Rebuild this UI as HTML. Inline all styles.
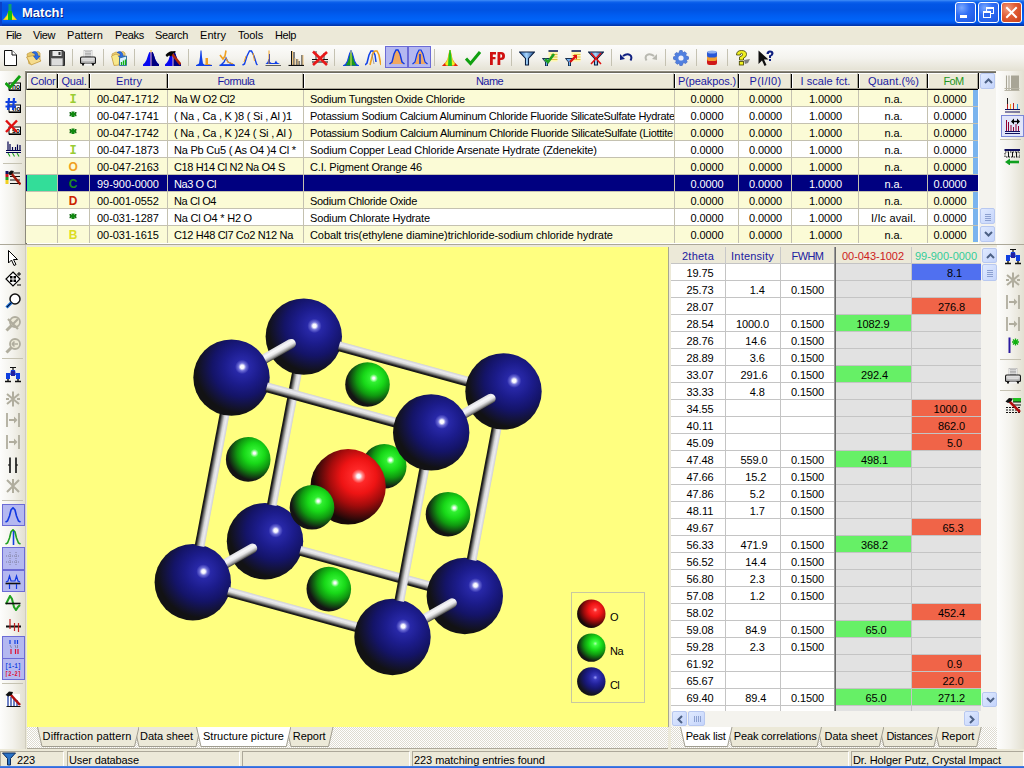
<!DOCTYPE html><html><head><meta charset="utf-8"><title>Match!</title><style>
*{margin:0;padding:0;box-sizing:border-box}
html,body{width:1024px;height:768px;overflow:hidden;background:#ece9d8;font-family:"Liberation Sans", sans-serif;font-size:11px;color:#000}
.a{position:absolute}
.t{position:absolute;white-space:nowrap;line-height:13px;letter-spacing:-0.15px}
</style></head><body>
<div class="a" style="left:0;top:0;width:1024px;height:26px;background:linear-gradient(to bottom,#3d8ef8 0px,#2a78f2 1px,#0d62ec 2px,#0256e6 4px,#0053e2 10px,#005cf0 15px,#0064f8 20px,#005af0 22px,#0049d2 24px,#0036ae 25px,#0036ae 26px)"></div>
<div class="a" style="left:0;top:2px;width:2px;height:24px;background:#0a40c8"></div>
<svg class="a" style="left:2px;top:3px" width="16" height="18" viewBox="0 0 16 18"><rect x="6.5" y="1" width="3" height="8" fill="#11a070"/><path d="M1 17 L5 12 L6 9 L10 9 L11 12 L15 17 Z" fill="#f0c020"/><path d="M3 16 L5.5 12.5 L6.5 9 L9.5 9 L10.5 12.5 L13 16 Z" fill="#e8f020"/><rect x="6" y="8" width="4" height="9" fill="#10c010"/></svg>
<div class="t" style="left:22px;top:5px;font-size:13px;line-height:16px;font-weight:bold;color:#fff;text-shadow:1px 1px 0 #0a1e80;letter-spacing:0">Match!</div>
<div class="a" style="left:955px;top:2px;width:21px;height:21px;border:1px solid #fff;border-radius:3px;background:radial-gradient(circle at 30% 25%,#7aa8ff 0%,#2f6ef5 40%,#1c56e0 100%)"><div class="a" style="left:4px;top:12px;width:7px;height:3px;background:#fff"></div></div>
<div class="a" style="left:978px;top:2px;width:21px;height:21px;border:1px solid #fff;border-radius:3px;background:radial-gradient(circle at 30% 25%,#7aa8ff 0%,#2f6ef5 40%,#1c56e0 100%)"><div class="a" style="left:7px;top:4px;width:8px;height:7px;border:1px solid #fff;border-top-width:2px"></div><div class="a" style="left:4px;top:8px;width:8px;height:7px;border:1px solid #fff;border-top-width:2px;background:#2a66ee"></div></div>
<div class="a" style="left:1001px;top:2px;width:21px;height:21px;border:1px solid #fff;border-radius:3px;background:radial-gradient(circle at 30% 30%,#f09c80 0%,#e05a32 45%,#c8401a 100%)"><svg class="a" style="left:3px;top:3px" width="13" height="13"><path d="M2 2 L11 11 M11 2 L2 11" stroke="#fff" stroke-width="2" stroke-linecap="square"/></svg></div>
<div class="a" style="left:0;top:26px;width:1024px;height:19px;background:#ece9d8;border-top:1px solid #f6f5ee"></div>
<div class="t" style="left:6px;top:29px;letter-spacing:-0.600px">File</div>
<div class="t" style="left:33px;top:29px;letter-spacing:-0.410px">View</div>
<div class="t" style="left:67px;top:29px;letter-spacing:0.071px">Pattern</div>
<div class="t" style="left:115px;top:29px;letter-spacing:-0.319px">Peaks</div>
<div class="t" style="left:155px;top:29px;letter-spacing:-0.312px">Search</div>
<div class="t" style="left:200px;top:29px;letter-spacing:0.062px">Entry</div>
<div class="t" style="left:238px;top:29px;letter-spacing:-0.138px">Tools</div>
<div class="t" style="left:275px;top:29px;letter-spacing:-0.406px">Help</div>
<div class="a" style="left:0;top:45px;width:1024px;height:26px;background:linear-gradient(to bottom,#fcfcfb 0%,#f4f3ee 50%,#e4e1d3 100%)"></div>
<div class="a" style="left:72px;top:49px;width:1px;height:17px;background:#c5c2b2"></div>
<div class="a" style="left:103px;top:49px;width:1px;height:17px;background:#c5c2b2"></div>
<div class="a" style="left:134px;top:49px;width:1px;height:17px;background:#c5c2b2"></div>
<div class="a" style="left:188px;top:49px;width:1px;height:17px;background:#c5c2b2"></div>
<div class="a" style="left:334px;top:49px;width:1px;height:17px;background:#c5c2b2"></div>
<div class="a" style="left:434px;top:49px;width:1px;height:17px;background:#c5c2b2"></div>
<div class="a" style="left:511px;top:49px;width:1px;height:17px;background:#c5c2b2"></div>
<div class="a" style="left:611px;top:49px;width:1px;height:17px;background:#c5c2b2"></div>
<div class="a" style="left:665px;top:49px;width:1px;height:17px;background:#c5c2b2"></div>
<div class="a" style="left:696px;top:49px;width:1px;height:17px;background:#c5c2b2"></div>
<div class="a" style="left:727px;top:49px;width:1px;height:17px;background:#c5c2b2"></div>
<div class="a" style="left:385px;top:46px;width:23px;height:22px;background:#b4b8f0;border:1px solid #6b6bd6"></div>
<div class="a" style="left:408px;top:46px;width:23px;height:22px;background:#b4b8f0;border:1px solid #6b6bd6"></div>
<div class="a" style="left:0;top:71px;width:25px;height:174px;background:linear-gradient(to right,#fdfdfc 0%,#f3f2ec 50%,#e3e0d2 100%)"></div>
<div class="a" style="left:3px;top:163px;width:19px;height:1px;background:#c5c2b2"></div>
<div class="a" style="left:25px;top:70px;width:971px;height:1px;background:#f4f3ee"></div>
<div class="a" style="left:25px;top:71px;width:971px;height:173px;background:#fff;border-top:1px solid #8c897c;border-left:1px solid #8c897c;"></div>
<div class="a" style="left:26px;top:72px;width:970px;height:1px;background:#6c6a60"></div>
<div class="a" style="left:26px;top:72px;width:1px;height:172px;background:#6c6a60"></div>
<div class="a" style="left:27px;top:73px;width:951px;height:16px;background:#ece9d8"></div>
<div class="a" style="left:27px;top:89px;width:951px;height:1px;background:#000"></div>
<div class="a" style="left:27px;top:73px;width:30px;height:16px;border-top:1px solid #fff;border-bottom:1px solid #aca899;border-right:1px solid #aca899;border-left:1px solid #fff;"></div>
<div class="t" style="left:28px;top:75px;width:30px;text-align:center;color:#1a1aa0;letter-spacing:-0.256px">Color</div>
<div class="a" style="left:57px;top:73px;width:1px;height:16px;background:#000"></div>
<div class="a" style="left:58px;top:73px;width:1px;height:16px;background:#fff"></div>
<div class="a" style="left:57px;top:73px;width:32px;height:16px;border-top:1px solid #fff;border-bottom:1px solid #aca899;border-right:1px solid #aca899;"></div>
<div class="t" style="left:58px;top:75px;width:32px;text-align:center;color:#1a1aa0;letter-spacing:-0.263px">Qual.</div>
<div class="a" style="left:89px;top:73px;width:1px;height:16px;background:#000"></div>
<div class="a" style="left:90px;top:73px;width:1px;height:16px;background:#fff"></div>
<div class="a" style="left:89px;top:73px;width:78px;height:16px;border-top:1px solid #fff;border-bottom:1px solid #aca899;border-right:1px solid #aca899;"></div>
<div class="t" style="left:90px;top:75px;width:78px;text-align:center;color:#1a1aa0;letter-spacing:0.062px">Entry</div>
<div class="a" style="left:167px;top:73px;width:1px;height:16px;background:#000"></div>
<div class="a" style="left:168px;top:73px;width:1px;height:16px;background:#fff"></div>
<div class="a" style="left:167px;top:73px;width:136px;height:16px;border-top:1px solid #fff;border-bottom:1px solid #aca899;border-right:1px solid #aca899;"></div>
<div class="t" style="left:168px;top:75px;width:136px;text-align:center;color:#1a1aa0;letter-spacing:-0.478px">Formula</div>
<div class="a" style="left:303px;top:73px;width:1px;height:16px;background:#000"></div>
<div class="a" style="left:304px;top:73px;width:1px;height:16px;background:#fff"></div>
<div class="a" style="left:303px;top:73px;width:371px;height:16px;border-top:1px solid #fff;border-bottom:1px solid #aca899;border-right:1px solid #aca899;"></div>
<div class="t" style="left:304px;top:75px;width:371px;text-align:center;color:#1a1aa0;letter-spacing:-0.586px">Name</div>
<div class="a" style="left:674px;top:73px;width:1px;height:16px;background:#000"></div>
<div class="a" style="left:675px;top:73px;width:1px;height:16px;background:#fff"></div>
<div class="a" style="left:674px;top:73px;width:64px;height:16px;border-top:1px solid #fff;border-bottom:1px solid #aca899;border-right:1px solid #aca899;"></div>
<div class="t" style="left:675px;top:75px;width:64px;text-align:center;color:#1a1aa0;letter-spacing:-0.122px">P(peakpos.)</div>
<div class="a" style="left:738px;top:73px;width:1px;height:16px;background:#000"></div>
<div class="a" style="left:739px;top:73px;width:1px;height:16px;background:#fff"></div>
<div class="a" style="left:738px;top:73px;width:53px;height:16px;border-top:1px solid #fff;border-bottom:1px solid #aca899;border-right:1px solid #aca899;"></div>
<div class="t" style="left:739px;top:75px;width:53px;text-align:center;color:#1a1aa0;letter-spacing:0.290px">P(I/I0)</div>
<div class="a" style="left:791px;top:73px;width:1px;height:16px;background:#000"></div>
<div class="a" style="left:792px;top:73px;width:1px;height:16px;background:#fff"></div>
<div class="a" style="left:791px;top:73px;width:67px;height:16px;border-top:1px solid #fff;border-bottom:1px solid #aca899;border-right:1px solid #aca899;"></div>
<div class="t" style="left:792px;top:75px;width:67px;text-align:center;color:#1a1aa0;letter-spacing:0.036px">I scale fct.</div>
<div class="a" style="left:858px;top:73px;width:1px;height:16px;background:#000"></div>
<div class="a" style="left:859px;top:73px;width:1px;height:16px;background:#fff"></div>
<div class="a" style="left:858px;top:73px;width:69px;height:16px;border-top:1px solid #fff;border-bottom:1px solid #aca899;border-right:1px solid #aca899;"></div>
<div class="t" style="left:859px;top:75px;width:69px;text-align:center;color:#1a1aa0;letter-spacing:0.094px">Quant.(%)</div>
<div class="a" style="left:927px;top:73px;width:1px;height:16px;background:#000"></div>
<div class="a" style="left:928px;top:73px;width:1px;height:16px;background:#fff"></div>
<div class="a" style="left:927px;top:73px;width:51px;height:16px;border-top:1px solid #fff;border-bottom:1px solid #aca899;border-right:1px solid #aca899;"></div>
<div class="t" style="left:928px;top:75px;width:51px;text-align:center;color:#1c961c;letter-spacing:-0.600px">FoM</div>
<div class="a" style="left:978px;top:73px;width:1px;height:16px;background:#000"></div>
<div class="a" style="left:979px;top:73px;width:1px;height:16px;background:#fff"></div>
<div class="a" style="left:26px;top:90px;width:952px;height:17px;background:#fbfbd6"></div>
<div class="a" style="left:26px;top:106px;width:952px;height:1px;background:#c4c1b0"></div>
<div class="a" style="left:57px;top:90px;width:1px;height:17px;background:#c4c1b0"></div>
<div class="a" style="left:89px;top:90px;width:1px;height:17px;background:#c4c1b0"></div>
<div class="a" style="left:167px;top:90px;width:1px;height:17px;background:#c4c1b0"></div>
<div class="a" style="left:303px;top:90px;width:1px;height:17px;background:#c4c1b0"></div>
<div class="a" style="left:674px;top:90px;width:1px;height:17px;background:#c4c1b0"></div>
<div class="a" style="left:738px;top:90px;width:1px;height:17px;background:#c4c1b0"></div>
<div class="a" style="left:791px;top:90px;width:1px;height:17px;background:#c4c1b0"></div>
<div class="a" style="left:858px;top:90px;width:1px;height:17px;background:#c4c1b0"></div>
<div class="a" style="left:927px;top:90px;width:1px;height:17px;background:#c4c1b0"></div>
<div class="t" style="left:57px;top:94px;width:32px;text-align:center;color:#99cc33;font-weight:bold;font-family:'Liberation Mono',monospace;font-size:12px">I</div>
<div class="t" style="left:97px;top:93px;color:#000;letter-spacing:-0.040px">00-047-1712</div>
<div class="t" style="left:174px;top:93px;color:#000;letter-spacing:-0.347px">Na W O2 Cl2</div>
<div class="a" style="left:304px;top:90px;width:370px;height:16px;overflow:hidden"><div class="t" style="left:6px;top:3px;color:#000;letter-spacing:-0.217px">Sodium Tungsten Oxide Chloride</div></div>
<div class="t" style="left:675px;top:93px;width:64px;text-align:center;color:#000;letter-spacing:-0.115px">0.0000</div>
<div class="t" style="left:739px;top:93px;width:53px;text-align:center;color:#000;letter-spacing:-0.115px">0.0000</div>
<div class="t" style="left:792px;top:93px;width:67px;text-align:center;color:#000;letter-spacing:-0.115px">1.0000</div>
<div class="t" style="left:859px;top:93px;width:69px;text-align:center;color:#000;letter-spacing:-0.094px">n.a.</div>
<div class="t" style="left:927px;top:93px;width:46px;text-align:center;color:#000;letter-spacing:-0.115px">0.0000</div>
<div class="a" style="left:973px;top:90px;width:5px;height:16px;background:#7ab4ee"></div>
<div class="a" style="left:26px;top:107px;width:952px;height:17px;background:#ffffff"></div>
<div class="a" style="left:26px;top:123px;width:952px;height:1px;background:#c4c1b0"></div>
<div class="a" style="left:57px;top:107px;width:1px;height:17px;background:#c4c1b0"></div>
<div class="a" style="left:89px;top:107px;width:1px;height:17px;background:#c4c1b0"></div>
<div class="a" style="left:167px;top:107px;width:1px;height:17px;background:#c4c1b0"></div>
<div class="a" style="left:303px;top:107px;width:1px;height:17px;background:#c4c1b0"></div>
<div class="a" style="left:674px;top:107px;width:1px;height:17px;background:#c4c1b0"></div>
<div class="a" style="left:738px;top:107px;width:1px;height:17px;background:#c4c1b0"></div>
<div class="a" style="left:791px;top:107px;width:1px;height:17px;background:#c4c1b0"></div>
<div class="a" style="left:858px;top:107px;width:1px;height:17px;background:#c4c1b0"></div>
<div class="a" style="left:927px;top:107px;width:1px;height:17px;background:#c4c1b0"></div>
<svg class="a" style="left:69px;top:111px" width="8" height="7"><rect x="2.5" y="0.5" width="3" height="5.5" fill="#108a10"/><rect x="1" y="2" width="6" height="2.5" fill="#108a10"/><rect x="0.5" y="1" width="1.6" height="1.6" fill="#1e6a1e"/><rect x="5.9" y="1" width="1.6" height="1.6" fill="#1e6a1e"/><rect x="0.5" y="3.6" width="1.6" height="1.6" fill="#1e6a1e"/><rect x="5.9" y="3.6" width="1.6" height="1.6" fill="#1e6a1e"/></svg>
<div class="t" style="left:97px;top:110px;color:#000;letter-spacing:-0.040px">00-047-1741</div>
<div class="t" style="left:174px;top:110px;color:#000;letter-spacing:-0.213px">( Na , Ca , K )8 ( Si , Al )1</div>
<div class="a" style="left:304px;top:107px;width:370px;height:16px;overflow:hidden"><div class="t" style="left:6px;top:3px;color:#000;letter-spacing:-0.295px">Potassium Sodium Calcium Aluminum Chloride Fluoride SilicateSulfate Hydrate</div></div>
<div class="t" style="left:675px;top:110px;width:64px;text-align:center;color:#000;letter-spacing:-0.115px">0.0000</div>
<div class="t" style="left:739px;top:110px;width:53px;text-align:center;color:#000;letter-spacing:-0.115px">0.0000</div>
<div class="t" style="left:792px;top:110px;width:67px;text-align:center;color:#000;letter-spacing:-0.115px">1.0000</div>
<div class="t" style="left:859px;top:110px;width:69px;text-align:center;color:#000;letter-spacing:-0.094px">n.a.</div>
<div class="t" style="left:927px;top:110px;width:46px;text-align:center;color:#000;letter-spacing:-0.115px">0.0000</div>
<div class="a" style="left:973px;top:107px;width:5px;height:16px;background:#7ab4ee"></div>
<div class="a" style="left:26px;top:124px;width:952px;height:17px;background:#fbfbd6"></div>
<div class="a" style="left:26px;top:140px;width:952px;height:1px;background:#c4c1b0"></div>
<div class="a" style="left:57px;top:124px;width:1px;height:17px;background:#c4c1b0"></div>
<div class="a" style="left:89px;top:124px;width:1px;height:17px;background:#c4c1b0"></div>
<div class="a" style="left:167px;top:124px;width:1px;height:17px;background:#c4c1b0"></div>
<div class="a" style="left:303px;top:124px;width:1px;height:17px;background:#c4c1b0"></div>
<div class="a" style="left:674px;top:124px;width:1px;height:17px;background:#c4c1b0"></div>
<div class="a" style="left:738px;top:124px;width:1px;height:17px;background:#c4c1b0"></div>
<div class="a" style="left:791px;top:124px;width:1px;height:17px;background:#c4c1b0"></div>
<div class="a" style="left:858px;top:124px;width:1px;height:17px;background:#c4c1b0"></div>
<div class="a" style="left:927px;top:124px;width:1px;height:17px;background:#c4c1b0"></div>
<svg class="a" style="left:69px;top:128px" width="8" height="7"><rect x="2.5" y="0.5" width="3" height="5.5" fill="#108a10"/><rect x="1" y="2" width="6" height="2.5" fill="#108a10"/><rect x="0.5" y="1" width="1.6" height="1.6" fill="#1e6a1e"/><rect x="5.9" y="1" width="1.6" height="1.6" fill="#1e6a1e"/><rect x="0.5" y="3.6" width="1.6" height="1.6" fill="#1e6a1e"/><rect x="5.9" y="3.6" width="1.6" height="1.6" fill="#1e6a1e"/></svg>
<div class="t" style="left:97px;top:127px;color:#000;letter-spacing:-0.040px">00-047-1742</div>
<div class="t" style="left:174px;top:127px;color:#000;letter-spacing:-0.213px">( Na , Ca , K )24 ( Si , Al )</div>
<div class="a" style="left:304px;top:124px;width:370px;height:16px;overflow:hidden"><div class="t" style="left:6px;top:3px;color:#000;letter-spacing:-0.282px">Potassium Sodium Calcium Aluminum Chloride Fluoride SilicateSulfate (Liottite</div></div>
<div class="t" style="left:675px;top:127px;width:64px;text-align:center;color:#000;letter-spacing:-0.115px">0.0000</div>
<div class="t" style="left:739px;top:127px;width:53px;text-align:center;color:#000;letter-spacing:-0.115px">0.0000</div>
<div class="t" style="left:792px;top:127px;width:67px;text-align:center;color:#000;letter-spacing:-0.115px">1.0000</div>
<div class="t" style="left:859px;top:127px;width:69px;text-align:center;color:#000;letter-spacing:-0.094px">n.a.</div>
<div class="t" style="left:927px;top:127px;width:46px;text-align:center;color:#000;letter-spacing:-0.115px">0.0000</div>
<div class="a" style="left:973px;top:124px;width:5px;height:16px;background:#7ab4ee"></div>
<div class="a" style="left:26px;top:141px;width:952px;height:17px;background:#ffffff"></div>
<div class="a" style="left:26px;top:157px;width:952px;height:1px;background:#c4c1b0"></div>
<div class="a" style="left:57px;top:141px;width:1px;height:17px;background:#c4c1b0"></div>
<div class="a" style="left:89px;top:141px;width:1px;height:17px;background:#c4c1b0"></div>
<div class="a" style="left:167px;top:141px;width:1px;height:17px;background:#c4c1b0"></div>
<div class="a" style="left:303px;top:141px;width:1px;height:17px;background:#c4c1b0"></div>
<div class="a" style="left:674px;top:141px;width:1px;height:17px;background:#c4c1b0"></div>
<div class="a" style="left:738px;top:141px;width:1px;height:17px;background:#c4c1b0"></div>
<div class="a" style="left:791px;top:141px;width:1px;height:17px;background:#c4c1b0"></div>
<div class="a" style="left:858px;top:141px;width:1px;height:17px;background:#c4c1b0"></div>
<div class="a" style="left:927px;top:141px;width:1px;height:17px;background:#c4c1b0"></div>
<div class="t" style="left:57px;top:145px;width:32px;text-align:center;color:#99cc33;font-weight:bold;font-family:'Liberation Mono',monospace;font-size:12px">I</div>
<div class="t" style="left:97px;top:144px;color:#000;letter-spacing:-0.040px">00-047-1873</div>
<div class="t" style="left:174px;top:144px;color:#000;letter-spacing:-0.209px">Na Pb Cu5 ( As O4 )4 Cl *</div>
<div class="a" style="left:304px;top:141px;width:370px;height:16px;overflow:hidden"><div class="t" style="left:6px;top:3px;color:#000;letter-spacing:-0.141px">Sodium Copper Lead Chloride Arsenate Hydrate (Zdenekite)</div></div>
<div class="t" style="left:675px;top:144px;width:64px;text-align:center;color:#000;letter-spacing:-0.115px">0.0000</div>
<div class="t" style="left:739px;top:144px;width:53px;text-align:center;color:#000;letter-spacing:-0.115px">0.0000</div>
<div class="t" style="left:792px;top:144px;width:67px;text-align:center;color:#000;letter-spacing:-0.115px">1.0000</div>
<div class="t" style="left:859px;top:144px;width:69px;text-align:center;color:#000;letter-spacing:-0.094px">n.a.</div>
<div class="t" style="left:927px;top:144px;width:46px;text-align:center;color:#000;letter-spacing:-0.115px">0.0000</div>
<div class="a" style="left:973px;top:141px;width:5px;height:16px;background:#7ab4ee"></div>
<div class="a" style="left:26px;top:158px;width:952px;height:17px;background:#fbfbd6"></div>
<div class="a" style="left:26px;top:174px;width:952px;height:1px;background:#c4c1b0"></div>
<div class="a" style="left:57px;top:158px;width:1px;height:17px;background:#c4c1b0"></div>
<div class="a" style="left:89px;top:158px;width:1px;height:17px;background:#c4c1b0"></div>
<div class="a" style="left:167px;top:158px;width:1px;height:17px;background:#c4c1b0"></div>
<div class="a" style="left:303px;top:158px;width:1px;height:17px;background:#c4c1b0"></div>
<div class="a" style="left:674px;top:158px;width:1px;height:17px;background:#c4c1b0"></div>
<div class="a" style="left:738px;top:158px;width:1px;height:17px;background:#c4c1b0"></div>
<div class="a" style="left:791px;top:158px;width:1px;height:17px;background:#c4c1b0"></div>
<div class="a" style="left:858px;top:158px;width:1px;height:17px;background:#c4c1b0"></div>
<div class="a" style="left:927px;top:158px;width:1px;height:17px;background:#c4c1b0"></div>
<div class="t" style="left:57px;top:160px;width:32px;text-align:center;color:#f0a020;font-weight:bold;font-size:12px;line-height:15px">O</div>
<div class="t" style="left:97px;top:161px;color:#000;letter-spacing:-0.040px">00-047-2163</div>
<div class="t" style="left:174px;top:161px;color:#000;letter-spacing:-0.394px">C18 H14 Cl N2 Na O4 S</div>
<div class="a" style="left:304px;top:158px;width:370px;height:16px;overflow:hidden"><div class="t" style="left:6px;top:3px;color:#000;letter-spacing:-0.166px">C.I. Pigment Orange 46</div></div>
<div class="t" style="left:675px;top:161px;width:64px;text-align:center;color:#000;letter-spacing:-0.115px">0.0000</div>
<div class="t" style="left:739px;top:161px;width:53px;text-align:center;color:#000;letter-spacing:-0.115px">0.0000</div>
<div class="t" style="left:792px;top:161px;width:67px;text-align:center;color:#000;letter-spacing:-0.115px">1.0000</div>
<div class="t" style="left:859px;top:161px;width:69px;text-align:center;color:#000;letter-spacing:-0.094px">n.a.</div>
<div class="t" style="left:927px;top:161px;width:46px;text-align:center;color:#000;letter-spacing:-0.115px">0.0000</div>
<div class="a" style="left:973px;top:158px;width:5px;height:16px;background:#7ab4ee"></div>
<div class="a" style="left:26px;top:175px;width:952px;height:17px;background:#000080"></div>
<div class="a" style="left:27px;top:175px;width:30px;height:16px;background:#33dd99"></div>
<div class="a" style="left:26px;top:191px;width:952px;height:1px;background:#c4c1b0"></div>
<div class="a" style="left:57px;top:175px;width:1px;height:17px;background:#c4c1b0"></div>
<div class="a" style="left:89px;top:175px;width:1px;height:17px;background:#c4c1b0"></div>
<div class="a" style="left:167px;top:175px;width:1px;height:17px;background:#c4c1b0"></div>
<div class="a" style="left:303px;top:175px;width:1px;height:17px;background:#c4c1b0"></div>
<div class="a" style="left:674px;top:175px;width:1px;height:17px;background:#c4c1b0"></div>
<div class="a" style="left:738px;top:175px;width:1px;height:17px;background:#c4c1b0"></div>
<div class="a" style="left:791px;top:175px;width:1px;height:17px;background:#c4c1b0"></div>
<div class="a" style="left:858px;top:175px;width:1px;height:17px;background:#c4c1b0"></div>
<div class="a" style="left:927px;top:175px;width:1px;height:17px;background:#c4c1b0"></div>
<div class="t" style="left:57px;top:177px;width:32px;text-align:center;color:#1e8a1e;font-weight:bold;font-size:12px;line-height:15px">C</div>
<div class="t" style="left:97px;top:178px;color:#fff;letter-spacing:-0.040px">99-900-0000</div>
<div class="t" style="left:174px;top:178px;color:#fff;letter-spacing:-0.406px">Na3 O Cl</div>
<div class="a" style="left:304px;top:175px;width:370px;height:16px;overflow:hidden"><div class="t" style="left:6px;top:3px;color:#fff"></div></div>
<div class="t" style="left:675px;top:178px;width:64px;text-align:center;color:#fff;letter-spacing:-0.115px">0.0000</div>
<div class="t" style="left:739px;top:178px;width:53px;text-align:center;color:#fff;letter-spacing:-0.115px">0.0000</div>
<div class="t" style="left:792px;top:178px;width:67px;text-align:center;color:#fff;letter-spacing:-0.115px">1.0000</div>
<div class="t" style="left:859px;top:178px;width:69px;text-align:center;color:#fff;letter-spacing:-0.094px">n.a.</div>
<div class="t" style="left:927px;top:178px;width:46px;text-align:center;color:#fff;letter-spacing:-0.115px">0.0000</div>
<div class="a" style="left:973px;top:175px;width:5px;height:16px;background:#000080"></div>
<div class="a" style="left:26px;top:192px;width:952px;height:17px;background:#fbfbd6"></div>
<div class="a" style="left:26px;top:208px;width:952px;height:1px;background:#c4c1b0"></div>
<div class="a" style="left:57px;top:192px;width:1px;height:17px;background:#c4c1b0"></div>
<div class="a" style="left:89px;top:192px;width:1px;height:17px;background:#c4c1b0"></div>
<div class="a" style="left:167px;top:192px;width:1px;height:17px;background:#c4c1b0"></div>
<div class="a" style="left:303px;top:192px;width:1px;height:17px;background:#c4c1b0"></div>
<div class="a" style="left:674px;top:192px;width:1px;height:17px;background:#c4c1b0"></div>
<div class="a" style="left:738px;top:192px;width:1px;height:17px;background:#c4c1b0"></div>
<div class="a" style="left:791px;top:192px;width:1px;height:17px;background:#c4c1b0"></div>
<div class="a" style="left:858px;top:192px;width:1px;height:17px;background:#c4c1b0"></div>
<div class="a" style="left:927px;top:192px;width:1px;height:17px;background:#c4c1b0"></div>
<div class="t" style="left:57px;top:194px;width:32px;text-align:center;color:#cc2200;font-weight:bold;font-size:12px;line-height:15px">D</div>
<div class="t" style="left:97px;top:195px;color:#000;letter-spacing:-0.040px">00-001-0552</div>
<div class="t" style="left:174px;top:195px;color:#000;letter-spacing:-0.406px">Na Cl O4</div>
<div class="a" style="left:304px;top:192px;width:370px;height:16px;overflow:hidden"><div class="t" style="left:6px;top:3px;color:#000;letter-spacing:-0.293px">Sodium Chloride Oxide</div></div>
<div class="t" style="left:675px;top:195px;width:64px;text-align:center;color:#000;letter-spacing:-0.115px">0.0000</div>
<div class="t" style="left:739px;top:195px;width:53px;text-align:center;color:#000;letter-spacing:-0.115px">0.0000</div>
<div class="t" style="left:792px;top:195px;width:67px;text-align:center;color:#000;letter-spacing:-0.115px">1.0000</div>
<div class="t" style="left:859px;top:195px;width:69px;text-align:center;color:#000;letter-spacing:-0.094px">n.a.</div>
<div class="t" style="left:927px;top:195px;width:46px;text-align:center;color:#000;letter-spacing:-0.115px">0.0000</div>
<div class="a" style="left:973px;top:192px;width:5px;height:16px;background:#7ab4ee"></div>
<div class="a" style="left:26px;top:209px;width:952px;height:17px;background:#ffffff"></div>
<div class="a" style="left:26px;top:225px;width:952px;height:1px;background:#c4c1b0"></div>
<div class="a" style="left:57px;top:209px;width:1px;height:17px;background:#c4c1b0"></div>
<div class="a" style="left:89px;top:209px;width:1px;height:17px;background:#c4c1b0"></div>
<div class="a" style="left:167px;top:209px;width:1px;height:17px;background:#c4c1b0"></div>
<div class="a" style="left:303px;top:209px;width:1px;height:17px;background:#c4c1b0"></div>
<div class="a" style="left:674px;top:209px;width:1px;height:17px;background:#c4c1b0"></div>
<div class="a" style="left:738px;top:209px;width:1px;height:17px;background:#c4c1b0"></div>
<div class="a" style="left:791px;top:209px;width:1px;height:17px;background:#c4c1b0"></div>
<div class="a" style="left:858px;top:209px;width:1px;height:17px;background:#c4c1b0"></div>
<div class="a" style="left:927px;top:209px;width:1px;height:17px;background:#c4c1b0"></div>
<svg class="a" style="left:69px;top:213px" width="8" height="7"><rect x="2.5" y="0.5" width="3" height="5.5" fill="#108a10"/><rect x="1" y="2" width="6" height="2.5" fill="#108a10"/><rect x="0.5" y="1" width="1.6" height="1.6" fill="#1e6a1e"/><rect x="5.9" y="1" width="1.6" height="1.6" fill="#1e6a1e"/><rect x="0.5" y="3.6" width="1.6" height="1.6" fill="#1e6a1e"/><rect x="5.9" y="3.6" width="1.6" height="1.6" fill="#1e6a1e"/></svg>
<div class="t" style="left:97px;top:212px;color:#000;letter-spacing:-0.040px">00-031-1287</div>
<div class="t" style="left:174px;top:212px;color:#000;letter-spacing:-0.223px">Na Cl O4 * H2 O</div>
<div class="a" style="left:304px;top:209px;width:370px;height:16px;overflow:hidden"><div class="t" style="left:6px;top:3px;color:#000;letter-spacing:-0.155px">Sodium Chlorate Hydrate</div></div>
<div class="t" style="left:675px;top:212px;width:64px;text-align:center;color:#000;letter-spacing:-0.115px">0.0000</div>
<div class="t" style="left:739px;top:212px;width:53px;text-align:center;color:#000;letter-spacing:-0.115px">0.0000</div>
<div class="t" style="left:792px;top:212px;width:67px;text-align:center;color:#000;letter-spacing:-0.115px">1.0000</div>
<div class="t" style="left:859px;top:212px;width:69px;text-align:center;color:#000;letter-spacing:0.142px">I/Ic avail.</div>
<div class="t" style="left:927px;top:212px;width:46px;text-align:center;color:#000;letter-spacing:-0.115px">0.0000</div>
<div class="a" style="left:973px;top:209px;width:5px;height:16px;background:#7ab4ee"></div>
<div class="a" style="left:26px;top:226px;width:952px;height:17px;background:#fbfbd6"></div>
<div class="a" style="left:57px;top:226px;width:1px;height:17px;background:#c4c1b0"></div>
<div class="a" style="left:89px;top:226px;width:1px;height:17px;background:#c4c1b0"></div>
<div class="a" style="left:167px;top:226px;width:1px;height:17px;background:#c4c1b0"></div>
<div class="a" style="left:303px;top:226px;width:1px;height:17px;background:#c4c1b0"></div>
<div class="a" style="left:674px;top:226px;width:1px;height:17px;background:#c4c1b0"></div>
<div class="a" style="left:738px;top:226px;width:1px;height:17px;background:#c4c1b0"></div>
<div class="a" style="left:791px;top:226px;width:1px;height:17px;background:#c4c1b0"></div>
<div class="a" style="left:858px;top:226px;width:1px;height:17px;background:#c4c1b0"></div>
<div class="a" style="left:927px;top:226px;width:1px;height:17px;background:#c4c1b0"></div>
<div class="t" style="left:57px;top:228px;width:32px;text-align:center;color:#dddd22;font-weight:bold;font-size:12px;line-height:15px">B</div>
<div class="t" style="left:97px;top:229px;color:#000;letter-spacing:-0.040px">00-031-1615</div>
<div class="t" style="left:174px;top:229px;color:#000;letter-spacing:-0.347px">C12 H48 Cl7 Co2 N12 Na</div>
<div class="a" style="left:304px;top:226px;width:370px;height:16px;overflow:hidden"><div class="t" style="left:6px;top:3px;color:#000;letter-spacing:-0.082px">Cobalt tris(ethylene diamine)trichloride-sodium chloride hydrate</div></div>
<div class="t" style="left:675px;top:229px;width:64px;text-align:center;color:#000;letter-spacing:-0.115px">0.0000</div>
<div class="t" style="left:739px;top:229px;width:53px;text-align:center;color:#000;letter-spacing:-0.115px">0.0000</div>
<div class="t" style="left:792px;top:229px;width:67px;text-align:center;color:#000;letter-spacing:-0.115px">1.0000</div>
<div class="t" style="left:859px;top:229px;width:69px;text-align:center;color:#000;letter-spacing:-0.094px">n.a.</div>
<div class="t" style="left:927px;top:229px;width:46px;text-align:center;color:#000;letter-spacing:-0.115px">0.0000</div>
<div class="a" style="left:973px;top:226px;width:5px;height:16px;background:#7ab4ee"></div>
<div class="a" style="left:979px;top:73px;width:17px;height:171px;background:#f4f3ee"></div>
<div class="a" style="left:980px;top:73px;width:15px;height:16px;border:1px solid #b8c8f0;border-radius:2px;background:linear-gradient(to bottom right,#e0eaff,#c4d4fb)"><svg class="a" style="left:3px;top:3px" width="9" height="8"><path d="M1 6 L4.5 2.5 L8 6" stroke="#4d6185" stroke-width="2" fill="none"/></svg></div>
<div class="a" style="left:980px;top:208px;width:15px;height:16px;border:1px solid #b8c8f0;border-radius:2px;background:linear-gradient(to bottom right,#e0eaff,#c4d4fb)"><div class="a" style="left:4px;top:5px;width:6px;height:1px;background:#8ca0d0;box-shadow:0 2px 0 #8ca0d0,0 4px 0 #8ca0d0,0 6px 0 #8ca0d0"></div></div>
<div class="a" style="left:980px;top:226px;width:15px;height:16px;border:1px solid #b8c8f0;border-radius:2px;background:linear-gradient(to bottom right,#e0eaff,#c4d4fb)"><svg class="a" style="left:3px;top:3px" width="9" height="8"><path d="M1 2 L4.5 5.5 L8 2" stroke="#4d6185" stroke-width="2" fill="none"/></svg></div>
<div class="a" style="left:996px;top:71px;width:28px;height:174px;background:linear-gradient(to right,#fdfdfc 0%,#f3f2ec 50%,#e3e0d2 100%)"></div>
<div class="a" style="left:1000px;top:139px;width:21px;height:1px;background:#c5c2b2"></div>
<div class="a" style="left:1001px;top:115px;width:23px;height:22px;background:#e1e6fa;border:1px solid #7b88d8"></div>
<div class="a" style="left:0;top:244px;width:1024px;height:1px;background:#aca899"></div>
<div class="a" style="left:0;top:245px;width:25px;height:504px;background:linear-gradient(to right,#fdfdfc 0%,#f3f2ec 50%,#e3e0d2 100%)"></div>
<div class="a" style="left:25px;top:245px;width:1px;height:504px;background:#d0cdbf"></div>
<div class="a" style="left:27px;top:247px;width:641px;height:480px;background:#ffff80"></div>
<div class="a" style="left:668px;top:247px;width:1px;height:480px;background:#a8a890"></div>
<svg class="a" style="left:0;top:0" width="1024" height="768" viewBox="0 0 1024 768"><defs><linearGradient id="r0" gradientUnits="userSpaceOnUse" x1="258.86" y1="356.44" x2="263.69" y2="364.97"><stop offset="0" stop-color="#dcdce0"/><stop offset="0.3" stop-color="#f8f8fa"/><stop offset="0.55" stop-color="#e6e6e8"/><stop offset="0.8" stop-color="#9a9a9a"/><stop offset="1" stop-color="#3a3a3a"/></linearGradient><linearGradient id="r1" gradientUnits="userSpaceOnUse" x1="292.60" y1="421.83" x2="282.97" y2="420.00"><stop offset="0" stop-color="#d0d0d4"/><stop offset="0.25" stop-color="#ececf0"/><stop offset="0.45" stop-color="#d8d8d8"/><stop offset="0.7" stop-color="#707070"/><stop offset="0.86" stop-color="#202020"/><stop offset="1" stop-color="#101010"/></linearGradient><linearGradient id="r2" gradientUnits="userSpaceOnUse" x1="422.48" y1="364.09" x2="419.89" y2="373.54"><stop offset="0" stop-color="#d0d0d4"/><stop offset="0.25" stop-color="#ececf0"/><stop offset="0.45" stop-color="#d8d8d8"/><stop offset="0.7" stop-color="#707070"/><stop offset="0.86" stop-color="#202020"/><stop offset="1" stop-color="#101010"/></linearGradient><linearGradient id="r3" gradientUnits="userSpaceOnUse" x1="220.35" y1="462.83" x2="210.72" y2="461.00"><stop offset="0" stop-color="#d0d0d4"/><stop offset="0.25" stop-color="#ececf0"/><stop offset="0.45" stop-color="#d8d8d8"/><stop offset="0.7" stop-color="#707070"/><stop offset="0.86" stop-color="#202020"/><stop offset="1" stop-color="#101010"/></linearGradient><linearGradient id="r4" gradientUnits="userSpaceOnUse" x1="350.23" y1="405.09" x2="347.64" y2="414.54"><stop offset="0" stop-color="#d0d0d4"/><stop offset="0.25" stop-color="#ececf0"/><stop offset="0.45" stop-color="#d8d8d8"/><stop offset="0.7" stop-color="#707070"/><stop offset="0.86" stop-color="#202020"/><stop offset="1" stop-color="#101010"/></linearGradient><linearGradient id="r5" gradientUnits="userSpaceOnUse" x1="220.11" y1="561.04" x2="224.94" y2="569.57"><stop offset="0" stop-color="#dcdce0"/><stop offset="0.3" stop-color="#f8f8fa"/><stop offset="0.55" stop-color="#e6e6e8"/><stop offset="0.8" stop-color="#9a9a9a"/><stop offset="1" stop-color="#3a3a3a"/></linearGradient><linearGradient id="r6" gradientUnits="userSpaceOnUse" x1="383.73" y1="568.69" x2="381.14" y2="578.14"><stop offset="0" stop-color="#d0d0d4"/><stop offset="0.25" stop-color="#ececf0"/><stop offset="0.45" stop-color="#d8d8d8"/><stop offset="0.7" stop-color="#707070"/><stop offset="0.86" stop-color="#202020"/><stop offset="1" stop-color="#101010"/></linearGradient><linearGradient id="r7" gradientUnits="userSpaceOnUse" x1="311.48" y1="609.69" x2="308.89" y2="619.14"><stop offset="0" stop-color="#d0d0d4"/><stop offset="0.25" stop-color="#ececf0"/><stop offset="0.45" stop-color="#d8d8d8"/><stop offset="0.7" stop-color="#707070"/><stop offset="0.86" stop-color="#202020"/><stop offset="1" stop-color="#101010"/></linearGradient><linearGradient id="r8" gradientUnits="userSpaceOnUse" x1="458.61" y1="411.24" x2="463.44" y2="419.77"><stop offset="0" stop-color="#dcdce0"/><stop offset="0.3" stop-color="#f8f8fa"/><stop offset="0.55" stop-color="#e6e6e8"/><stop offset="0.8" stop-color="#9a9a9a"/><stop offset="1" stop-color="#3a3a3a"/></linearGradient><linearGradient id="r9" gradientUnits="userSpaceOnUse" x1="492.35" y1="476.63" x2="482.72" y2="474.80"><stop offset="0" stop-color="#d0d0d4"/><stop offset="0.25" stop-color="#ececf0"/><stop offset="0.45" stop-color="#d8d8d8"/><stop offset="0.7" stop-color="#707070"/><stop offset="0.86" stop-color="#202020"/><stop offset="1" stop-color="#101010"/></linearGradient><linearGradient id="r10" gradientUnits="userSpaceOnUse" x1="420.10" y1="517.63" x2="410.47" y2="515.80"><stop offset="0" stop-color="#d0d0d4"/><stop offset="0.25" stop-color="#ececf0"/><stop offset="0.45" stop-color="#d8d8d8"/><stop offset="0.7" stop-color="#707070"/><stop offset="0.86" stop-color="#202020"/><stop offset="1" stop-color="#101010"/></linearGradient><linearGradient id="r11" gradientUnits="userSpaceOnUse" x1="419.86" y1="615.84" x2="424.69" y2="624.37"><stop offset="0" stop-color="#dcdce0"/><stop offset="0.3" stop-color="#f8f8fa"/><stop offset="0.55" stop-color="#e6e6e8"/><stop offset="0.8" stop-color="#9a9a9a"/><stop offset="1" stop-color="#3a3a3a"/></linearGradient><radialGradient id="gCl" cx="0.64" cy="0.36" fx="0.64" fy="0.36" r="0.78"><stop offset="0" stop-color="#ffffff"/><stop offset="0.03" stop-color="#f8f8ff"/><stop offset="0.065" stop-color="#7070d8"/><stop offset="0.12" stop-color="#2828a8"/><stop offset="0.3" stop-color="#1c1c8c"/><stop offset="0.5" stop-color="#141468"/><stop offset="0.78" stop-color="#121214"/><stop offset="1" stop-color="#121214"/></radialGradient><radialGradient id="gNa" cx="0.64" cy="0.36" fx="0.64" fy="0.36" r="0.78"><stop offset="0" stop-color="#ffffff"/><stop offset="0.03" stop-color="#f8f8ff"/><stop offset="0.065" stop-color="#a0ffa0"/><stop offset="0.12" stop-color="#30f030"/><stop offset="0.3" stop-color="#18d818"/><stop offset="0.5" stop-color="#109a10"/><stop offset="0.78" stop-color="#141414"/><stop offset="1" stop-color="#141414"/></radialGradient><radialGradient id="gO" cx="0.64" cy="0.36" fx="0.64" fy="0.36" r="0.78"><stop offset="0" stop-color="#ffffff"/><stop offset="0.03" stop-color="#f8f8ff"/><stop offset="0.065" stop-color="#ff9090"/><stop offset="0.12" stop-color="#ff2828"/><stop offset="0.3" stop-color="#ee1414"/><stop offset="0.5" stop-color="#a40c0c"/><stop offset="0.78" stop-color="#180808"/><stop offset="1" stop-color="#180808"/></radialGradient></defs><circle cx="265.0" cy="541.2" r="38.2" fill="url(#gCl)"/><line x1="271.8" y1="505.2" x2="303.8" y2="336.6" stroke="url(#r1)" stroke-width="9.8" stroke-linecap="butt"/><line x1="300.1" y1="550.8" x2="464.8" y2="596.0" stroke="url(#r6)" stroke-width="9.8" stroke-linecap="butt"/><circle cx="303.8" cy="336.6" r="38.2" fill="url(#gCl)"/><circle cx="384.2" cy="466.3" r="22.3" fill="url(#gNa)"/><circle cx="464.8" cy="596.0" r="38.2" fill="url(#gCl)"/><line x1="338.9" y1="346.2" x2="503.5" y2="391.4" stroke="url(#r2)" stroke-width="9.8" stroke-linecap="butt"/><line x1="471.6" y1="560.0" x2="503.5" y2="391.4" stroke="url(#r9)" stroke-width="9.8" stroke-linecap="butt"/><line x1="252.3" y1="548.4" x2="192.8" y2="582.2" stroke="url(#r5)" stroke-width="9.8" stroke-linecap="round"/><circle cx="503.5" cy="391.4" r="38.2" fill="url(#gCl)"/><circle cx="248.2" cy="459.4" r="22.3" fill="url(#gNa)"/><circle cx="328.8" cy="589.1" r="22.3" fill="url(#gNa)"/><line x1="291.0" y1="343.8" x2="231.5" y2="377.6" stroke="url(#r0)" stroke-width="9.8" stroke-linecap="round"/><circle cx="348.1" cy="486.8" r="37.7" fill="url(#gO)"/><line x1="452.0" y1="603.2" x2="392.5" y2="637.0" stroke="url(#r11)" stroke-width="9.8" stroke-linecap="round"/><circle cx="367.5" cy="384.5" r="22.3" fill="url(#gNa)"/><circle cx="448.0" cy="514.2" r="22.3" fill="url(#gNa)"/><circle cx="192.8" cy="582.2" r="38.2" fill="url(#gCl)"/><line x1="490.8" y1="398.6" x2="431.2" y2="432.4" stroke="url(#r8)" stroke-width="9.8" stroke-linecap="round"/><line x1="199.6" y1="546.2" x2="231.5" y2="377.6" stroke="url(#r3)" stroke-width="9.8" stroke-linecap="butt"/><line x1="227.9" y1="591.8" x2="392.5" y2="637.0" stroke="url(#r7)" stroke-width="9.8" stroke-linecap="butt"/><circle cx="231.5" cy="377.6" r="38.2" fill="url(#gCl)"/><circle cx="312.0" cy="507.3" r="22.3" fill="url(#gNa)"/><circle cx="392.5" cy="637.0" r="38.2" fill="url(#gCl)"/><line x1="266.6" y1="387.2" x2="431.2" y2="432.4" stroke="url(#r4)" stroke-width="9.8" stroke-linecap="butt"/><line x1="399.3" y1="601.0" x2="431.2" y2="432.4" stroke="url(#r10)" stroke-width="9.8" stroke-linecap="butt"/><circle cx="431.2" cy="432.4" r="38.2" fill="url(#gCl)"/></svg>
<div class="a" style="left:571px;top:592px;width:74px;height:111px;border:1px solid #c8c8a0"></div>
<svg class="a" style="left:570px;top:590px" width="40" height="110"><defs><radialGradient id="lO" cx="0.64" cy="0.36" fx="0.64" fy="0.36" r="0.78"><stop offset="0" stop-color="#ffb0b0"/><stop offset="0.1" stop-color="#ff3030"/><stop offset="0.3" stop-color="#ee1414"/><stop offset="0.5" stop-color="#a40c0c"/><stop offset="0.8" stop-color="#180808"/></radialGradient><radialGradient id="lNa" cx="0.64" cy="0.36" fx="0.64" fy="0.36" r="0.78"><stop offset="0" stop-color="#b0ffb0"/><stop offset="0.1" stop-color="#40ff40"/><stop offset="0.3" stop-color="#18d818"/><stop offset="0.5" stop-color="#109a10"/><stop offset="0.8" stop-color="#141414"/></radialGradient><radialGradient id="lCl" cx="0.64" cy="0.36" fx="0.64" fy="0.36" r="0.78"><stop offset="0" stop-color="#a0a0ff"/><stop offset="0.1" stop-color="#3a3ac0"/><stop offset="0.3" stop-color="#22229a"/><stop offset="0.5" stop-color="#171772"/><stop offset="0.8" stop-color="#141418"/></radialGradient></defs><circle cx="21.3" cy="23.8" r="14.2" fill="url(#lO)"/><circle cx="21.3" cy="57.6" r="14.2" fill="url(#lNa)"/><circle cx="21.3" cy="91.5" r="14.2" fill="url(#lCl)"/></svg>
<div class="t" style="left:610px;top:611px;letter-spacing:-0.562px">O</div>
<div class="t" style="left:610px;top:645px;letter-spacing:-0.531px">Na</div>
<div class="t" style="left:610px;top:679px;letter-spacing:-0.600px">Cl</div>
<div class="a" style="left:669px;top:245px;width:328px;height:504px;background:#ece9d8"></div>
<div class="a" style="left:671px;top:247px;width:326px;height:480px;background:#ece9d8;"></div>
<div class="a" style="left:671px;top:247px;width:310px;height:17px;background:#ece9d8;border-bottom:1px solid #c4c4c4"></div>
<div class="t" style="left:671px;top:250px;width:54px;text-align:center;color:#2020a0;letter-spacing:0.229px">2theta</div>
<div class="a" style="left:725px;top:247px;width:1px;height:17px;background:#c8c8c8"></div>
<div class="t" style="left:725px;top:250px;width:55px;text-align:center;color:#2020a0;letter-spacing:0.222px">Intensity</div>
<div class="a" style="left:780px;top:247px;width:1px;height:17px;background:#c8c8c8"></div>
<div class="t" style="left:780px;top:250px;width:55px;text-align:center;color:#2020a0;letter-spacing:-0.600px">FWHM</div>
<div class="a" style="left:835px;top:247px;width:1px;height:17px;background:#c8c8c8"></div>
<div class="t" style="left:835px;top:250px;width:76px;text-align:center;color:#cc2020;letter-spacing:-0.040px">00-043-1002</div>
<div class="a" style="left:911px;top:247px;width:1px;height:17px;background:#c8c8c8"></div>
<div class="t" style="left:911px;top:250px;width:70px;text-align:center;color:#33cc99;letter-spacing:-0.040px">99-900-0000</div>
<div class="a" style="left:671px;top:264px;width:310px;height:447px;overflow:hidden">
<div class="a" style="left:0;top:0px;width:164px;height:17px;background:#fff"></div>
<div class="a" style="left:164px;top:0px;width:146px;height:17px;background:#e2e2e2"></div>
<div class="a" style="left:0;top:16px;width:310px;height:1px;background:#c4c4c4"></div>
<div class="a" style="left:54px;top:0px;width:1px;height:17px;background:#c4c4c4"></div>
<div class="a" style="left:109px;top:0px;width:1px;height:17px;background:#c4c4c4"></div>
<div class="a" style="left:164px;top:0px;width:1px;height:17px;background:#c4c4c4"></div>
<div class="a" style="left:240px;top:0px;width:1px;height:17px;background:#c4c4c4"></div>
<div class="a" style="left:241px;top:0px;width:69px;height:16px;background:#5070f0"></div>
<div class="t" style="left:2px;top:3px;width:54px;text-align:center;letter-spacing:-0.113px">19.75</div>
<div class="t" style="left:54.00px;top:3px;width:55px;text-align:center"></div>
<div class="t" style="left:109px;top:3px;width:55px;text-align:center"></div>
<div class="t" style="left:244.5px;top:3px;width:78px;text-align:center;letter-spacing:-0.104px">8.1</div>
<div class="a" style="left:0;top:17px;width:164px;height:17px;background:#fff"></div>
<div class="a" style="left:164px;top:17px;width:146px;height:17px;background:#e2e2e2"></div>
<div class="a" style="left:0;top:33px;width:310px;height:1px;background:#c4c4c4"></div>
<div class="a" style="left:54px;top:17px;width:1px;height:17px;background:#c4c4c4"></div>
<div class="a" style="left:109px;top:17px;width:1px;height:17px;background:#c4c4c4"></div>
<div class="a" style="left:164px;top:17px;width:1px;height:17px;background:#c4c4c4"></div>
<div class="a" style="left:240px;top:17px;width:1px;height:17px;background:#c4c4c4"></div>
<div class="t" style="left:2px;top:20px;width:54px;text-align:center;letter-spacing:-0.113px">25.73</div>
<div class="t" style="left:58.80px;top:20px;width:55px;text-align:center;letter-spacing:-0.104px">1.4</div>
<div class="t" style="left:109px;top:20px;width:55px;text-align:center;letter-spacing:-0.115px">0.1500</div>
<div class="a" style="left:0;top:34px;width:164px;height:17px;background:#fff"></div>
<div class="a" style="left:164px;top:34px;width:146px;height:17px;background:#e2e2e2"></div>
<div class="a" style="left:0;top:50px;width:310px;height:1px;background:#c4c4c4"></div>
<div class="a" style="left:54px;top:34px;width:1px;height:17px;background:#c4c4c4"></div>
<div class="a" style="left:109px;top:34px;width:1px;height:17px;background:#c4c4c4"></div>
<div class="a" style="left:164px;top:34px;width:1px;height:17px;background:#c4c4c4"></div>
<div class="a" style="left:240px;top:34px;width:1px;height:17px;background:#c4c4c4"></div>
<div class="a" style="left:241px;top:34px;width:69px;height:16px;background:#f06448"></div>
<div class="t" style="left:2px;top:37px;width:54px;text-align:center;letter-spacing:-0.113px">28.07</div>
<div class="t" style="left:54.00px;top:37px;width:55px;text-align:center"></div>
<div class="t" style="left:109px;top:37px;width:55px;text-align:center"></div>
<div class="t" style="left:241.5px;top:37px;width:78px;text-align:center;letter-spacing:-0.113px">276.8</div>
<div class="a" style="left:0;top:51px;width:164px;height:17px;background:#fff"></div>
<div class="a" style="left:164px;top:51px;width:146px;height:17px;background:#e2e2e2"></div>
<div class="a" style="left:0;top:67px;width:310px;height:1px;background:#c4c4c4"></div>
<div class="a" style="left:54px;top:51px;width:1px;height:17px;background:#c4c4c4"></div>
<div class="a" style="left:109px;top:51px;width:1px;height:17px;background:#c4c4c4"></div>
<div class="a" style="left:164px;top:51px;width:1px;height:17px;background:#c4c4c4"></div>
<div class="a" style="left:240px;top:51px;width:1px;height:17px;background:#c4c4c4"></div>
<div class="a" style="left:165px;top:51px;width:75px;height:16px;background:#66f066"></div>
<div class="t" style="left:2px;top:54px;width:54px;text-align:center;letter-spacing:-0.113px">28.54</div>
<div class="t" style="left:54.00px;top:54px;width:55px;text-align:center;letter-spacing:-0.115px">1000.0</div>
<div class="t" style="left:109px;top:54px;width:55px;text-align:center;letter-spacing:-0.115px">0.1500</div>
<div class="t" style="left:164.0px;top:54px;width:76px;text-align:center;letter-spacing:-0.115px">1082.9</div>
<div class="a" style="left:0;top:68px;width:164px;height:17px;background:#fff"></div>
<div class="a" style="left:164px;top:68px;width:146px;height:17px;background:#e2e2e2"></div>
<div class="a" style="left:0;top:84px;width:310px;height:1px;background:#c4c4c4"></div>
<div class="a" style="left:54px;top:68px;width:1px;height:17px;background:#c4c4c4"></div>
<div class="a" style="left:109px;top:68px;width:1px;height:17px;background:#c4c4c4"></div>
<div class="a" style="left:164px;top:68px;width:1px;height:17px;background:#c4c4c4"></div>
<div class="a" style="left:240px;top:68px;width:1px;height:17px;background:#c4c4c4"></div>
<div class="t" style="left:2px;top:71px;width:54px;text-align:center;letter-spacing:-0.113px">28.76</div>
<div class="t" style="left:57.20px;top:71px;width:55px;text-align:center;letter-spacing:-0.109px">14.6</div>
<div class="t" style="left:109px;top:71px;width:55px;text-align:center;letter-spacing:-0.115px">0.1500</div>
<div class="a" style="left:0;top:85px;width:164px;height:17px;background:#fff"></div>
<div class="a" style="left:164px;top:85px;width:146px;height:17px;background:#e2e2e2"></div>
<div class="a" style="left:0;top:101px;width:310px;height:1px;background:#c4c4c4"></div>
<div class="a" style="left:54px;top:85px;width:1px;height:17px;background:#c4c4c4"></div>
<div class="a" style="left:109px;top:85px;width:1px;height:17px;background:#c4c4c4"></div>
<div class="a" style="left:164px;top:85px;width:1px;height:17px;background:#c4c4c4"></div>
<div class="a" style="left:240px;top:85px;width:1px;height:17px;background:#c4c4c4"></div>
<div class="t" style="left:2px;top:88px;width:54px;text-align:center;letter-spacing:-0.113px">28.89</div>
<div class="t" style="left:58.80px;top:88px;width:55px;text-align:center;letter-spacing:-0.104px">3.6</div>
<div class="t" style="left:109px;top:88px;width:55px;text-align:center;letter-spacing:-0.115px">0.1500</div>
<div class="a" style="left:0;top:102px;width:164px;height:17px;background:#fff"></div>
<div class="a" style="left:164px;top:102px;width:146px;height:17px;background:#e2e2e2"></div>
<div class="a" style="left:0;top:118px;width:310px;height:1px;background:#c4c4c4"></div>
<div class="a" style="left:54px;top:102px;width:1px;height:17px;background:#c4c4c4"></div>
<div class="a" style="left:109px;top:102px;width:1px;height:17px;background:#c4c4c4"></div>
<div class="a" style="left:164px;top:102px;width:1px;height:17px;background:#c4c4c4"></div>
<div class="a" style="left:240px;top:102px;width:1px;height:17px;background:#c4c4c4"></div>
<div class="a" style="left:165px;top:102px;width:75px;height:16px;background:#66f066"></div>
<div class="t" style="left:2px;top:105px;width:54px;text-align:center;letter-spacing:-0.113px">33.07</div>
<div class="t" style="left:55.60px;top:105px;width:55px;text-align:center;letter-spacing:-0.113px">291.6</div>
<div class="t" style="left:109px;top:105px;width:55px;text-align:center;letter-spacing:-0.115px">0.1500</div>
<div class="t" style="left:165.5px;top:105px;width:76px;text-align:center;letter-spacing:-0.113px">292.4</div>
<div class="a" style="left:0;top:119px;width:164px;height:17px;background:#fff"></div>
<div class="a" style="left:164px;top:119px;width:146px;height:17px;background:#e2e2e2"></div>
<div class="a" style="left:0;top:135px;width:310px;height:1px;background:#c4c4c4"></div>
<div class="a" style="left:54px;top:119px;width:1px;height:17px;background:#c4c4c4"></div>
<div class="a" style="left:109px;top:119px;width:1px;height:17px;background:#c4c4c4"></div>
<div class="a" style="left:164px;top:119px;width:1px;height:17px;background:#c4c4c4"></div>
<div class="a" style="left:240px;top:119px;width:1px;height:17px;background:#c4c4c4"></div>
<div class="t" style="left:2px;top:122px;width:54px;text-align:center;letter-spacing:-0.113px">33.33</div>
<div class="t" style="left:58.80px;top:122px;width:55px;text-align:center;letter-spacing:-0.104px">4.8</div>
<div class="t" style="left:109px;top:122px;width:55px;text-align:center;letter-spacing:-0.115px">0.1500</div>
<div class="a" style="left:0;top:136px;width:164px;height:17px;background:#fff"></div>
<div class="a" style="left:164px;top:136px;width:146px;height:17px;background:#e2e2e2"></div>
<div class="a" style="left:0;top:152px;width:310px;height:1px;background:#c4c4c4"></div>
<div class="a" style="left:54px;top:136px;width:1px;height:17px;background:#c4c4c4"></div>
<div class="a" style="left:109px;top:136px;width:1px;height:17px;background:#c4c4c4"></div>
<div class="a" style="left:164px;top:136px;width:1px;height:17px;background:#c4c4c4"></div>
<div class="a" style="left:240px;top:136px;width:1px;height:17px;background:#c4c4c4"></div>
<div class="a" style="left:241px;top:136px;width:69px;height:16px;background:#f06448"></div>
<div class="t" style="left:2px;top:139px;width:54px;text-align:center;letter-spacing:-0.113px">34.55</div>
<div class="t" style="left:54.00px;top:139px;width:55px;text-align:center"></div>
<div class="t" style="left:109px;top:139px;width:55px;text-align:center"></div>
<div class="t" style="left:240.0px;top:139px;width:78px;text-align:center;letter-spacing:-0.115px">1000.0</div>
<div class="a" style="left:0;top:153px;width:164px;height:17px;background:#fff"></div>
<div class="a" style="left:164px;top:153px;width:146px;height:17px;background:#e2e2e2"></div>
<div class="a" style="left:0;top:169px;width:310px;height:1px;background:#c4c4c4"></div>
<div class="a" style="left:54px;top:153px;width:1px;height:17px;background:#c4c4c4"></div>
<div class="a" style="left:109px;top:153px;width:1px;height:17px;background:#c4c4c4"></div>
<div class="a" style="left:164px;top:153px;width:1px;height:17px;background:#c4c4c4"></div>
<div class="a" style="left:240px;top:153px;width:1px;height:17px;background:#c4c4c4"></div>
<div class="a" style="left:241px;top:153px;width:69px;height:16px;background:#f06448"></div>
<div class="t" style="left:2px;top:156px;width:54px;text-align:center;letter-spacing:0.050px">40.11</div>
<div class="t" style="left:54.00px;top:156px;width:55px;text-align:center"></div>
<div class="t" style="left:109px;top:156px;width:55px;text-align:center"></div>
<div class="t" style="left:241.5px;top:156px;width:78px;text-align:center;letter-spacing:-0.113px">862.0</div>
<div class="a" style="left:0;top:170px;width:164px;height:17px;background:#fff"></div>
<div class="a" style="left:164px;top:170px;width:146px;height:17px;background:#e2e2e2"></div>
<div class="a" style="left:0;top:186px;width:310px;height:1px;background:#c4c4c4"></div>
<div class="a" style="left:54px;top:170px;width:1px;height:17px;background:#c4c4c4"></div>
<div class="a" style="left:109px;top:170px;width:1px;height:17px;background:#c4c4c4"></div>
<div class="a" style="left:164px;top:170px;width:1px;height:17px;background:#c4c4c4"></div>
<div class="a" style="left:240px;top:170px;width:1px;height:17px;background:#c4c4c4"></div>
<div class="a" style="left:241px;top:170px;width:69px;height:16px;background:#f06448"></div>
<div class="t" style="left:2px;top:173px;width:54px;text-align:center;letter-spacing:-0.113px">45.09</div>
<div class="t" style="left:54.00px;top:173px;width:55px;text-align:center"></div>
<div class="t" style="left:109px;top:173px;width:55px;text-align:center"></div>
<div class="t" style="left:244.5px;top:173px;width:78px;text-align:center;letter-spacing:-0.104px">5.0</div>
<div class="a" style="left:0;top:187px;width:164px;height:17px;background:#fff"></div>
<div class="a" style="left:164px;top:187px;width:146px;height:17px;background:#e2e2e2"></div>
<div class="a" style="left:0;top:203px;width:310px;height:1px;background:#c4c4c4"></div>
<div class="a" style="left:54px;top:187px;width:1px;height:17px;background:#c4c4c4"></div>
<div class="a" style="left:109px;top:187px;width:1px;height:17px;background:#c4c4c4"></div>
<div class="a" style="left:164px;top:187px;width:1px;height:17px;background:#c4c4c4"></div>
<div class="a" style="left:240px;top:187px;width:1px;height:17px;background:#c4c4c4"></div>
<div class="a" style="left:165px;top:187px;width:75px;height:16px;background:#66f066"></div>
<div class="t" style="left:2px;top:190px;width:54px;text-align:center;letter-spacing:-0.113px">47.48</div>
<div class="t" style="left:55.60px;top:190px;width:55px;text-align:center;letter-spacing:-0.113px">559.0</div>
<div class="t" style="left:109px;top:190px;width:55px;text-align:center;letter-spacing:-0.115px">0.1500</div>
<div class="t" style="left:165.5px;top:190px;width:76px;text-align:center;letter-spacing:-0.113px">498.1</div>
<div class="a" style="left:0;top:204px;width:164px;height:17px;background:#fff"></div>
<div class="a" style="left:164px;top:204px;width:146px;height:17px;background:#e2e2e2"></div>
<div class="a" style="left:0;top:220px;width:310px;height:1px;background:#c4c4c4"></div>
<div class="a" style="left:54px;top:204px;width:1px;height:17px;background:#c4c4c4"></div>
<div class="a" style="left:109px;top:204px;width:1px;height:17px;background:#c4c4c4"></div>
<div class="a" style="left:164px;top:204px;width:1px;height:17px;background:#c4c4c4"></div>
<div class="a" style="left:240px;top:204px;width:1px;height:17px;background:#c4c4c4"></div>
<div class="t" style="left:2px;top:207px;width:54px;text-align:center;letter-spacing:-0.113px">47.66</div>
<div class="t" style="left:57.20px;top:207px;width:55px;text-align:center;letter-spacing:-0.109px">15.2</div>
<div class="t" style="left:109px;top:207px;width:55px;text-align:center;letter-spacing:-0.115px">0.1500</div>
<div class="a" style="left:0;top:221px;width:164px;height:17px;background:#fff"></div>
<div class="a" style="left:164px;top:221px;width:146px;height:17px;background:#e2e2e2"></div>
<div class="a" style="left:0;top:237px;width:310px;height:1px;background:#c4c4c4"></div>
<div class="a" style="left:54px;top:221px;width:1px;height:17px;background:#c4c4c4"></div>
<div class="a" style="left:109px;top:221px;width:1px;height:17px;background:#c4c4c4"></div>
<div class="a" style="left:164px;top:221px;width:1px;height:17px;background:#c4c4c4"></div>
<div class="a" style="left:240px;top:221px;width:1px;height:17px;background:#c4c4c4"></div>
<div class="t" style="left:2px;top:224px;width:54px;text-align:center;letter-spacing:-0.113px">47.86</div>
<div class="t" style="left:58.80px;top:224px;width:55px;text-align:center;letter-spacing:-0.104px">5.2</div>
<div class="t" style="left:109px;top:224px;width:55px;text-align:center;letter-spacing:-0.115px">0.1500</div>
<div class="a" style="left:0;top:238px;width:164px;height:17px;background:#fff"></div>
<div class="a" style="left:164px;top:238px;width:146px;height:17px;background:#e2e2e2"></div>
<div class="a" style="left:0;top:254px;width:310px;height:1px;background:#c4c4c4"></div>
<div class="a" style="left:54px;top:238px;width:1px;height:17px;background:#c4c4c4"></div>
<div class="a" style="left:109px;top:238px;width:1px;height:17px;background:#c4c4c4"></div>
<div class="a" style="left:164px;top:238px;width:1px;height:17px;background:#c4c4c4"></div>
<div class="a" style="left:240px;top:238px;width:1px;height:17px;background:#c4c4c4"></div>
<div class="t" style="left:2px;top:241px;width:54px;text-align:center;letter-spacing:0.050px">48.11</div>
<div class="t" style="left:58.80px;top:241px;width:55px;text-align:center;letter-spacing:-0.104px">1.7</div>
<div class="t" style="left:109px;top:241px;width:55px;text-align:center;letter-spacing:-0.115px">0.1500</div>
<div class="a" style="left:0;top:255px;width:164px;height:17px;background:#fff"></div>
<div class="a" style="left:164px;top:255px;width:146px;height:17px;background:#e2e2e2"></div>
<div class="a" style="left:0;top:271px;width:310px;height:1px;background:#c4c4c4"></div>
<div class="a" style="left:54px;top:255px;width:1px;height:17px;background:#c4c4c4"></div>
<div class="a" style="left:109px;top:255px;width:1px;height:17px;background:#c4c4c4"></div>
<div class="a" style="left:164px;top:255px;width:1px;height:17px;background:#c4c4c4"></div>
<div class="a" style="left:240px;top:255px;width:1px;height:17px;background:#c4c4c4"></div>
<div class="a" style="left:241px;top:255px;width:69px;height:16px;background:#f06448"></div>
<div class="t" style="left:2px;top:258px;width:54px;text-align:center;letter-spacing:-0.113px">49.67</div>
<div class="t" style="left:54.00px;top:258px;width:55px;text-align:center"></div>
<div class="t" style="left:109px;top:258px;width:55px;text-align:center"></div>
<div class="t" style="left:243.0px;top:258px;width:78px;text-align:center;letter-spacing:-0.109px">65.3</div>
<div class="a" style="left:0;top:272px;width:164px;height:17px;background:#fff"></div>
<div class="a" style="left:164px;top:272px;width:146px;height:17px;background:#e2e2e2"></div>
<div class="a" style="left:0;top:288px;width:310px;height:1px;background:#c4c4c4"></div>
<div class="a" style="left:54px;top:272px;width:1px;height:17px;background:#c4c4c4"></div>
<div class="a" style="left:109px;top:272px;width:1px;height:17px;background:#c4c4c4"></div>
<div class="a" style="left:164px;top:272px;width:1px;height:17px;background:#c4c4c4"></div>
<div class="a" style="left:240px;top:272px;width:1px;height:17px;background:#c4c4c4"></div>
<div class="a" style="left:165px;top:272px;width:75px;height:16px;background:#66f066"></div>
<div class="t" style="left:2px;top:275px;width:54px;text-align:center;letter-spacing:-0.113px">56.33</div>
<div class="t" style="left:55.60px;top:275px;width:55px;text-align:center;letter-spacing:-0.113px">471.9</div>
<div class="t" style="left:109px;top:275px;width:55px;text-align:center;letter-spacing:-0.115px">0.1500</div>
<div class="t" style="left:165.5px;top:275px;width:76px;text-align:center;letter-spacing:-0.113px">368.2</div>
<div class="a" style="left:0;top:289px;width:164px;height:17px;background:#fff"></div>
<div class="a" style="left:164px;top:289px;width:146px;height:17px;background:#e2e2e2"></div>
<div class="a" style="left:0;top:305px;width:310px;height:1px;background:#c4c4c4"></div>
<div class="a" style="left:54px;top:289px;width:1px;height:17px;background:#c4c4c4"></div>
<div class="a" style="left:109px;top:289px;width:1px;height:17px;background:#c4c4c4"></div>
<div class="a" style="left:164px;top:289px;width:1px;height:17px;background:#c4c4c4"></div>
<div class="a" style="left:240px;top:289px;width:1px;height:17px;background:#c4c4c4"></div>
<div class="t" style="left:2px;top:292px;width:54px;text-align:center;letter-spacing:-0.113px">56.52</div>
<div class="t" style="left:57.20px;top:292px;width:55px;text-align:center;letter-spacing:-0.109px">14.4</div>
<div class="t" style="left:109px;top:292px;width:55px;text-align:center;letter-spacing:-0.115px">0.1500</div>
<div class="a" style="left:0;top:306px;width:164px;height:17px;background:#fff"></div>
<div class="a" style="left:164px;top:306px;width:146px;height:17px;background:#e2e2e2"></div>
<div class="a" style="left:0;top:322px;width:310px;height:1px;background:#c4c4c4"></div>
<div class="a" style="left:54px;top:306px;width:1px;height:17px;background:#c4c4c4"></div>
<div class="a" style="left:109px;top:306px;width:1px;height:17px;background:#c4c4c4"></div>
<div class="a" style="left:164px;top:306px;width:1px;height:17px;background:#c4c4c4"></div>
<div class="a" style="left:240px;top:306px;width:1px;height:17px;background:#c4c4c4"></div>
<div class="t" style="left:2px;top:309px;width:54px;text-align:center;letter-spacing:-0.113px">56.80</div>
<div class="t" style="left:58.80px;top:309px;width:55px;text-align:center;letter-spacing:-0.104px">2.3</div>
<div class="t" style="left:109px;top:309px;width:55px;text-align:center;letter-spacing:-0.115px">0.1500</div>
<div class="a" style="left:0;top:323px;width:164px;height:17px;background:#fff"></div>
<div class="a" style="left:164px;top:323px;width:146px;height:17px;background:#e2e2e2"></div>
<div class="a" style="left:0;top:339px;width:310px;height:1px;background:#c4c4c4"></div>
<div class="a" style="left:54px;top:323px;width:1px;height:17px;background:#c4c4c4"></div>
<div class="a" style="left:109px;top:323px;width:1px;height:17px;background:#c4c4c4"></div>
<div class="a" style="left:164px;top:323px;width:1px;height:17px;background:#c4c4c4"></div>
<div class="a" style="left:240px;top:323px;width:1px;height:17px;background:#c4c4c4"></div>
<div class="t" style="left:2px;top:326px;width:54px;text-align:center;letter-spacing:-0.113px">57.08</div>
<div class="t" style="left:58.80px;top:326px;width:55px;text-align:center;letter-spacing:-0.104px">1.2</div>
<div class="t" style="left:109px;top:326px;width:55px;text-align:center;letter-spacing:-0.115px">0.1500</div>
<div class="a" style="left:0;top:340px;width:164px;height:17px;background:#fff"></div>
<div class="a" style="left:164px;top:340px;width:146px;height:17px;background:#e2e2e2"></div>
<div class="a" style="left:0;top:356px;width:310px;height:1px;background:#c4c4c4"></div>
<div class="a" style="left:54px;top:340px;width:1px;height:17px;background:#c4c4c4"></div>
<div class="a" style="left:109px;top:340px;width:1px;height:17px;background:#c4c4c4"></div>
<div class="a" style="left:164px;top:340px;width:1px;height:17px;background:#c4c4c4"></div>
<div class="a" style="left:240px;top:340px;width:1px;height:17px;background:#c4c4c4"></div>
<div class="a" style="left:241px;top:340px;width:69px;height:16px;background:#f06448"></div>
<div class="t" style="left:2px;top:343px;width:54px;text-align:center;letter-spacing:-0.113px">58.02</div>
<div class="t" style="left:54.00px;top:343px;width:55px;text-align:center"></div>
<div class="t" style="left:109px;top:343px;width:55px;text-align:center"></div>
<div class="t" style="left:241.5px;top:343px;width:78px;text-align:center;letter-spacing:-0.113px">452.4</div>
<div class="a" style="left:0;top:357px;width:164px;height:17px;background:#fff"></div>
<div class="a" style="left:164px;top:357px;width:146px;height:17px;background:#e2e2e2"></div>
<div class="a" style="left:0;top:373px;width:310px;height:1px;background:#c4c4c4"></div>
<div class="a" style="left:54px;top:357px;width:1px;height:17px;background:#c4c4c4"></div>
<div class="a" style="left:109px;top:357px;width:1px;height:17px;background:#c4c4c4"></div>
<div class="a" style="left:164px;top:357px;width:1px;height:17px;background:#c4c4c4"></div>
<div class="a" style="left:240px;top:357px;width:1px;height:17px;background:#c4c4c4"></div>
<div class="a" style="left:165px;top:357px;width:75px;height:16px;background:#66f066"></div>
<div class="t" style="left:2px;top:360px;width:54px;text-align:center;letter-spacing:-0.113px">59.08</div>
<div class="t" style="left:57.20px;top:360px;width:55px;text-align:center;letter-spacing:-0.109px">84.9</div>
<div class="t" style="left:109px;top:360px;width:55px;text-align:center;letter-spacing:-0.115px">0.1500</div>
<div class="t" style="left:167.0px;top:360px;width:76px;text-align:center;letter-spacing:-0.109px">65.0</div>
<div class="a" style="left:0;top:374px;width:164px;height:17px;background:#fff"></div>
<div class="a" style="left:164px;top:374px;width:146px;height:17px;background:#e2e2e2"></div>
<div class="a" style="left:0;top:390px;width:310px;height:1px;background:#c4c4c4"></div>
<div class="a" style="left:54px;top:374px;width:1px;height:17px;background:#c4c4c4"></div>
<div class="a" style="left:109px;top:374px;width:1px;height:17px;background:#c4c4c4"></div>
<div class="a" style="left:164px;top:374px;width:1px;height:17px;background:#c4c4c4"></div>
<div class="a" style="left:240px;top:374px;width:1px;height:17px;background:#c4c4c4"></div>
<div class="t" style="left:2px;top:377px;width:54px;text-align:center;letter-spacing:-0.113px">59.28</div>
<div class="t" style="left:58.80px;top:377px;width:55px;text-align:center;letter-spacing:-0.104px">2.3</div>
<div class="t" style="left:109px;top:377px;width:55px;text-align:center;letter-spacing:-0.115px">0.1500</div>
<div class="a" style="left:0;top:391px;width:164px;height:17px;background:#fff"></div>
<div class="a" style="left:164px;top:391px;width:146px;height:17px;background:#e2e2e2"></div>
<div class="a" style="left:0;top:407px;width:310px;height:1px;background:#c4c4c4"></div>
<div class="a" style="left:54px;top:391px;width:1px;height:17px;background:#c4c4c4"></div>
<div class="a" style="left:109px;top:391px;width:1px;height:17px;background:#c4c4c4"></div>
<div class="a" style="left:164px;top:391px;width:1px;height:17px;background:#c4c4c4"></div>
<div class="a" style="left:240px;top:391px;width:1px;height:17px;background:#c4c4c4"></div>
<div class="a" style="left:241px;top:391px;width:69px;height:16px;background:#f06448"></div>
<div class="t" style="left:2px;top:394px;width:54px;text-align:center;letter-spacing:-0.113px">61.92</div>
<div class="t" style="left:54.00px;top:394px;width:55px;text-align:center"></div>
<div class="t" style="left:109px;top:394px;width:55px;text-align:center"></div>
<div class="t" style="left:244.5px;top:394px;width:78px;text-align:center;letter-spacing:-0.104px">0.9</div>
<div class="a" style="left:0;top:408px;width:164px;height:17px;background:#fff"></div>
<div class="a" style="left:164px;top:408px;width:146px;height:17px;background:#e2e2e2"></div>
<div class="a" style="left:0;top:424px;width:310px;height:1px;background:#c4c4c4"></div>
<div class="a" style="left:54px;top:408px;width:1px;height:17px;background:#c4c4c4"></div>
<div class="a" style="left:109px;top:408px;width:1px;height:17px;background:#c4c4c4"></div>
<div class="a" style="left:164px;top:408px;width:1px;height:17px;background:#c4c4c4"></div>
<div class="a" style="left:240px;top:408px;width:1px;height:17px;background:#c4c4c4"></div>
<div class="a" style="left:241px;top:408px;width:69px;height:16px;background:#f06448"></div>
<div class="t" style="left:2px;top:411px;width:54px;text-align:center;letter-spacing:-0.113px">65.67</div>
<div class="t" style="left:54.00px;top:411px;width:55px;text-align:center"></div>
<div class="t" style="left:109px;top:411px;width:55px;text-align:center"></div>
<div class="t" style="left:243.0px;top:411px;width:78px;text-align:center;letter-spacing:-0.109px">22.0</div>
<div class="a" style="left:0;top:425px;width:164px;height:17px;background:#fff"></div>
<div class="a" style="left:164px;top:425px;width:146px;height:17px;background:#e2e2e2"></div>
<div class="a" style="left:0;top:441px;width:310px;height:1px;background:#c4c4c4"></div>
<div class="a" style="left:54px;top:425px;width:1px;height:17px;background:#c4c4c4"></div>
<div class="a" style="left:109px;top:425px;width:1px;height:17px;background:#c4c4c4"></div>
<div class="a" style="left:164px;top:425px;width:1px;height:17px;background:#c4c4c4"></div>
<div class="a" style="left:240px;top:425px;width:1px;height:17px;background:#c4c4c4"></div>
<div class="a" style="left:165px;top:425px;width:75px;height:16px;background:#66f066"></div>
<div class="a" style="left:241px;top:425px;width:69px;height:16px;background:#66f066"></div>
<div class="t" style="left:2px;top:428px;width:54px;text-align:center;letter-spacing:-0.113px">69.40</div>
<div class="t" style="left:57.20px;top:428px;width:55px;text-align:center;letter-spacing:-0.109px">89.4</div>
<div class="t" style="left:109px;top:428px;width:55px;text-align:center;letter-spacing:-0.115px">0.1500</div>
<div class="t" style="left:167.0px;top:428px;width:76px;text-align:center;letter-spacing:-0.109px">65.0</div>
<div class="t" style="left:241.5px;top:428px;width:78px;text-align:center;letter-spacing:-0.113px">271.2</div>
<div class="a" style="left:0;top:442px;width:164px;height:17px;background:#fff"></div>
<div class="a" style="left:164px;top:442px;width:146px;height:17px;background:#e2e2e2"></div>
<div class="a" style="left:0;top:458px;width:310px;height:1px;background:#c4c4c4"></div>
<div class="a" style="left:54px;top:442px;width:1px;height:17px;background:#c4c4c4"></div>
<div class="a" style="left:109px;top:442px;width:1px;height:17px;background:#c4c4c4"></div>
<div class="a" style="left:164px;top:442px;width:1px;height:17px;background:#c4c4c4"></div>
<div class="a" style="left:240px;top:442px;width:1px;height:17px;background:#c4c4c4"></div>
<div class="t" style="left:2px;top:445px;width:54px;text-align:center"></div>
<div class="t" style="left:54.00px;top:445px;width:55px;text-align:center"></div>
<div class="t" style="left:109px;top:445px;width:55px;text-align:center"></div>
</div>
<div class="a" style="left:834px;top:247px;width:1px;height:464px;background:#9a9a9a"></div>
<div class="a" style="left:835px;top:247px;width:1px;height:464px;background:#6a6a6a"></div>
<div class="a" style="left:981px;top:247px;width:16px;height:464px;background:#f4f3ee"></div>
<div class="a" style="left:982px;top:248px;width:15px;height:15px;border:1px solid #b8c8f0;border-radius:2px;background:linear-gradient(to bottom right,#e0eaff,#c4d4fb)"><svg class="a" style="left:3px;top:3px" width="9" height="8"><path d="M1 6 L4.5 2.5 L8 6" stroke="#4d6185" stroke-width="2" fill="none"/></svg></div>
<div class="a" style="left:982px;top:264px;width:15px;height:17px;border:1px solid #b8c8f0;border-radius:2px;background:linear-gradient(to bottom right,#e0eaff,#c4d4fb)"><div class="a" style="left:4px;top:5px;width:6px;height:1px;background:#8ca0d0;box-shadow:0 2px 0 #8ca0d0,0 4px 0 #8ca0d0,0 6px 0 #8ca0d0"></div></div>
<div class="a" style="left:982px;top:692px;width:15px;height:15px;border:1px solid #b8c8f0;border-radius:2px;background:linear-gradient(to bottom right,#e0eaff,#c4d4fb)"><svg class="a" style="left:3px;top:3px" width="9" height="8"><path d="M1 2 L4.5 5.5 L8 2" stroke="#4d6185" stroke-width="2" fill="none"/></svg></div>
<div class="a" style="left:671px;top:711px;width:326px;height:16px;background:#f4f3ee"></div>
<div class="a" style="left:672px;top:711px;width:15px;height:15px;border:1px solid #b8c8f0;border-radius:2px;background:linear-gradient(to bottom right,#e0eaff,#c4d4fb)"><svg class="a" style="left:3px;top:3px" width="8" height="9"><path d="M6 1 L2.5 4.5 L6 8" stroke="#4d6185" stroke-width="2" fill="none"/></svg></div>
<div class="a" style="left:688px;top:711px;width:17px;height:15px;border:1px solid #b8c8f0;border-radius:2px;background:linear-gradient(to bottom right,#e0eaff,#c4d4fb)"><div class="a" style="left:5px;top:4px;width:1px;height:6px;background:#8ca0d0;box-shadow:2px 0 0 #8ca0d0,4px 0 0 #8ca0d0,6px 0 0 #8ca0d0"></div></div>
<div class="a" style="left:964px;top:711px;width:15px;height:15px;border:1px solid #b8c8f0;border-radius:2px;background:linear-gradient(to bottom right,#e0eaff,#c4d4fb)"><svg class="a" style="left:3px;top:3px" width="8" height="9"><path d="M2 1 L5.5 4.5 L2 8" stroke="#4d6185" stroke-width="2" fill="none"/></svg></div>
<div class="a" style="left:997px;top:245px;width:27px;height:504px;background:linear-gradient(to right,#fdfdfc 0%,#f3f2ec 50%,#e3e0d2 100%)"></div>
<div class="a" style="left:1000px;top:359px;width:21px;height:1px;background:#c5c2b2"></div>
<div class="a" style="left:1000px;top:390px;width:21px;height:1px;background:#c5c2b2"></div>
<div class="a" style="left:27px;top:727px;width:641px;height:22px;background:repeating-conic-gradient(#ffffff 0 25%, #dedbd0 0 50%) 0 0/2px 2px"></div>
<div class="a" style="left:27px;top:748px;width:641px;height:1px;background:#aca899"></div>
<svg class="a" style="left:286.0px;top:727px" width="47.5" height="21"><path d="M0.5 0 L5 19.5 L42.5 19.5 L47.0 0" fill="#ece9d8" stroke="#a09d90" stroke-width="1"/></svg>
<div class="t" style="left:292.7px;top:730px;letter-spacing:-0.005px">Report</div>
<svg class="a" style="left:134.0px;top:727px" width="67.0" height="21"><path d="M0.5 0 L5 19.5 L62.0 19.5 L66.5 0" fill="#ece9d8" stroke="#a09d90" stroke-width="1"/></svg>
<div class="t" style="left:140.0px;top:730px;letter-spacing:-0.025px">Data sheet</div>
<svg class="a" style="left:36.5px;top:727px" width="102.5" height="21"><path d="M0.5 0 L5 19.5 L97.5 19.5 L102.0 0" fill="#ece9d8" stroke="#a09d90" stroke-width="1"/></svg>
<div class="t" style="left:42.6px;top:730px;letter-spacing:0.123px">Diffraction pattern</div>
<svg class="a" style="left:196.0px;top:727px" width="95.3" height="21"><path d="M0.5 0 L5 19.5 L90.3 19.5 L94.8 0" fill="#ffffff" stroke="#a09d90" stroke-width="1"/></svg>
<div class="t" style="left:203.0px;top:730px;letter-spacing:0.015px">Structure picture</div>
<div class="a" style="left:671px;top:727px;width:326px;height:22px;background:repeating-conic-gradient(#ffffff 0 25%, #dedbd0 0 50%) 0 0/2px 2px"></div>
<div class="a" style="left:671px;top:748px;width:326px;height:1px;background:#aca899"></div>
<svg class="a" style="left:934.0px;top:727px" width="47.7" height="21"><path d="M0.5 0 L5 19.5 L42.7 19.5 L47.2 0" fill="#ece9d8" stroke="#a09d90" stroke-width="1"/></svg>
<div class="t" style="left:941.4px;top:730px;letter-spacing:-0.005px">Report</div>
<svg class="a" style="left:879.0px;top:727px" width="60.0" height="21"><path d="M0.5 0 L5 19.5 L55.0 19.5 L59.5 0" fill="#ece9d8" stroke="#a09d90" stroke-width="1"/></svg>
<div class="t" style="left:886.4px;top:730px;letter-spacing:-0.257px">Distances</div>
<svg class="a" style="left:817.0px;top:727px" width="67.3" height="21"><path d="M0.5 0 L5 19.5 L62.3 19.5 L66.8 0" fill="#ece9d8" stroke="#a09d90" stroke-width="1"/></svg>
<div class="t" style="left:824.5px;top:730px;letter-spacing:-0.025px">Data sheet</div>
<svg class="a" style="left:727.0px;top:727px" width="95.0" height="21"><path d="M0.5 0 L5 19.5 L90.0 19.5 L94.5 0" fill="#ece9d8" stroke="#a09d90" stroke-width="1"/></svg>
<div class="t" style="left:733.7px;top:730px;letter-spacing:-0.119px">Peak correlations</div>
<svg class="a" style="left:680.0px;top:727px" width="52.5" height="21"><path d="M0.5 0 L5 19.5 L47.5 19.5 L52.0 0" fill="#ffffff" stroke="#a09d90" stroke-width="1"/></svg>
<div class="t" style="left:685.7px;top:730px;letter-spacing:-0.177px">Peak list</div>
<div class="a" style="left:0;top:749px;width:1024px;height:17px;background:#ece9d8"></div>
<div class="a" style="left:0px;top:751px;width:64px;height:15px;border-top:1px solid #aca899;border-left:1px solid #aca899;border-right:1px solid #fff"></div>
<div class="a" style="left:67px;top:751px;width:173px;height:15px;border-top:1px solid #aca899;border-left:1px solid #aca899;border-right:1px solid #fff"></div>
<div class="a" style="left:242px;top:751px;width:168px;height:15px;border-top:1px solid #aca899;border-left:1px solid #aca899;border-right:1px solid #fff"></div>
<div class="a" style="left:412px;top:751px;width:437px;height:15px;border-top:1px solid #aca899;border-left:1px solid #aca899;border-right:1px solid #fff"></div>
<div class="a" style="left:851px;top:751px;width:173px;height:15px;border-top:1px solid #aca899;border-left:1px solid #aca899;border-right:1px solid #fff"></div>
<div class="t" style="left:17px;top:754px;letter-spacing:-0.125px">223</div>
<div class="t" style="left:69px;top:754px;letter-spacing:-0.123px">User database</div>
<div class="t" style="left:414px;top:754px;letter-spacing:-0.070px">223 matching entries found</div>
<div class="t" style="left:853px;top:754px;letter-spacing:-0.098px">Dr. Holger Putz, Crystal Impact</div>
<svg class="a" style="left:2px;top:752px" width="14" height="14"><path d="M0.5 1 L13.5 1 L8.5 6.5 L8.5 13 L5.5 13 L5.5 6.5 Z" fill="#2a74c8" stroke="#0c2a5a" stroke-width="1"/></svg>
<div class="a" style="left:0;top:766px;width:1024px;height:2px;background:linear-gradient(#4a86e8,#2c62d8)"></div>
<svg class="a" style="left:3px;top:50px" width="16" height="16" viewBox="0 0 16 16"><path d="M1.5 0.5 H9 L13.5 5 V15.5 H1.5 Z" fill="#fff" stroke="#111"/><path d="M9 0.5 V5 H13.5" fill="#fff" stroke="#111"/></svg>
<svg class="a" style="left:26px;top:50px" width="16" height="16" viewBox="0 0 16 16"><path d="M1 4 L5 2 L8 3 L12 1.5 L14 3 L14 11 L3 14 Z" fill="#e6c86a" stroke="#c8a246" stroke-width="0.8"/><path d="M0.5 7 L10 5 L15 11 L5 15 Z" fill="#f6dc8c" stroke="#c49a40" stroke-width="0.8"/><path d="M6 2.5 C9 0.5 12 2 12 6 L14 6 L10.5 10 L7.5 6 L9.5 6 C9.5 4 8 3 6 2.5 Z" fill="#2a6ee6" stroke="#1848b0" stroke-width="0.6"/></svg>
<svg class="a" style="left:49px;top:50px" width="16" height="16" viewBox="0 0 16 16"><path d="M0.5 0.5 H14 L15.5 2 V15.5 H0.5 Z" fill="#4a4a4a" stroke="#2a2a2a"/><rect x="3.5" y="1" width="9" height="5" fill="#e8e8e8"/><rect x="9.5" y="2" width="2" height="3" fill="#333"/><rect x="2.5" y="8.5" width="11" height="7" fill="#dcdcdc" stroke="#bbb" stroke-width="0.5"/></svg>
<svg class="a" style="left:80px;top:50px" width="16" height="16" viewBox="0 0 16 16"><rect x="4" y="0.5" width="8" height="7" fill="#fff" stroke="#aaa" stroke-width="0.6"/><path d="M5 1.8 H11 M5 3.3 H11 M5 4.8 H11 M5 6.3 H11" stroke="#8a8a8a" stroke-width="0.8"/><defs><linearGradient id="prg" x1="0" y1="0" x2="0" y2="1"><stop offset="0" stop-color="#f4f4f4"/><stop offset="1" stop-color="#9a9a9a"/></linearGradient></defs><path d="M2 7 H14 Q15.5 7 15.5 8.5 V12.5 Q15.5 13.5 14.5 13.5 H1.5 Q0.5 13.5 0.5 12.5 V8.5 Q0.5 7 2 7 Z" fill="url(#prg)" stroke="#1a1a1a" stroke-width="1.1"/><rect x="2.5" y="9.5" width="11" height="1.6" fill="#dcdcdc"/><rect x="2" y="13" width="2" height="2.5" fill="#1a1a1a"/><rect x="12" y="13" width="2" height="2.5" fill="#1a1a1a"/><rect x="4.5" y="13.5" width="7" height="2" fill="#f4f4f4"/></svg>
<svg class="a" style="left:111px;top:50px" width="16" height="16" viewBox="0 0 16 16"><path d="M1 4 L5 2 L8 3 L12 1.5 L14 3 L14 11 L3 14 Z" fill="#eed27a" stroke="#c8a246" stroke-width="0.8"/><path d="M0.5 6 L5 4 L9 6 L8 15 L3 15.5 Z" fill="#f8e88a" stroke="#c49a40" stroke-width="0.8"/><path d="M6 2.5 C9 0.5 12 2 12 6 L14 6 L10.5 10 L7.5 6 L9.5 6 C9.5 4 8 3 6 2.5 Z" fill="#2a6ee6" stroke="#1848b0" stroke-width="0.6"/><path d="M8.5 8 L15.5 6 V15.5 H8.5 Z" fill="#d8f0ff" stroke="#2a6a9a" stroke-width="0.9"/><path d="M10.5 15 V12 M12.5 15 V10.5 M14.5 15 V9.5" stroke="#10b010" stroke-width="1.3"/></svg>
<svg class="a" style="left:143px;top:50px" width="16" height="16" viewBox="0 0 16 16"><path d="M0 16 V14.5 L2 12.5 L3.5 10 L4.5 7 L5.5 4 L6.5 2 H9.5 L10.5 4 L11.5 7 L12.5 10 L14 12.5 L16 14.5 V16 Z" fill="#0808f0"/><path d="M8 2 H9.5 L10.5 4 L11.5 7 L12.5 10 L14 12.5 L16 14.5 V16 H8 Z" fill="#000080"/><path d="M8 2 V16" stroke="#e8b0c8" stroke-width="1"/><path d="M8 0 V2.5" stroke="#f0c050" stroke-width="1.2"/></svg>
<svg class="a" style="left:165px;top:50px" width="16" height="16" viewBox="0 0 16 16"><path d="M0 16 V14.5 L2 12.5 L3.5 10 L4.5 7 L5.5 4 L6.5 2 H9.5 L10.5 4 L11.5 7 L12.5 10 L14 12.5 L16 14.5 V16 Z" fill="#0808f0"/><path d="M8 2 H9.5 L10.5 4 L11.5 7 L12.5 10 L14 12.5 L16 14.5 V16 H8 Z" fill="#000080"/><path d="M8 2 V16" stroke="#e8b0c8" stroke-width="1"/><path d="M5.5 2 L15.5 14.5" stroke="#b02808" stroke-width="2.6"/><path d="M0.5 5 L2.5 3 L5 1.5 L10.5 1 L10.5 2.5 L8 3.5 L6 6.5 L4 5.5 L2 7 Z" fill="#050505"/></svg>
<svg class="a" style="left:196px;top:50px" width="16" height="16" viewBox="0 0 16 16"><path d="M0.5 15 L3 13.5 L4 7 L4.5 0.5 L5.5 0.5 L6 7 L7 13.5 L9 15 Z" fill="#1040e8"/><rect x="9.5" y="8" width="2.5" height="7" fill="#f0a020"/><path d="M10 15 L8.5 14 L13.5 14 L15.5 15" fill="#f0a020"/><path d="M0 15.5 H16" stroke="#1040e8" stroke-width="1.2"/></svg>
<svg class="a" style="left:219px;top:50px" width="16" height="16" viewBox="0 0 16 16"><path d="M1 5 L4 9 L6 6 L7 0.5" stroke="#f0a020" stroke-width="1.6" fill="none"/><path d="M2 15 L5 12 L7 8 L9 12 L13 14 L15 15 Z" fill="none" stroke="#1040e8" stroke-width="1.3"/><path d="M6.5 8 L9 12 L14 14" stroke="#f0a020" stroke-width="1.2" fill="none"/><path d="M0.5 15.3 H16" stroke="#1040e8" stroke-width="1.4"/></svg>
<svg class="a" style="left:242px;top:50px" width="16" height="16" viewBox="0 0 16 16"><path d="M0.5 15 L2.5 14 L5 6 L7.5 1 L9.5 1 L12 6 L14.5 14 L15.5 15" stroke="#1040e8" stroke-width="1.4" fill="none"/><path d="M2 12 L4 6 M11 3 L12.5 11" stroke="#f0a020" stroke-width="1" fill="none"/></svg>
<svg class="a" style="left:265px;top:50px" width="16" height="16" viewBox="0 0 16 16"><path d="M0.5 14 L2.5 12 L3.5 9 L4.5 9 L5 12 L6.5 13 L9.5 13 L11 10.5 L12 12.5 L15 14 Z" fill="#1040e8"/><path d="M4 0.5 V14" stroke="#f0a020" stroke-width="1"/><path d="M4.5 4 V14" stroke="#5050a0" stroke-width="1"/><path d="M0.5 16 H16" stroke="#000" stroke-width="1.2"/></svg>
<svg class="a" style="left:288px;top:50px" width="16" height="16" viewBox="0 0 16 16"><path d="M3.5 15 V1 M6 15 V2 M9 15 V9 M11 15 V11 M14 15 V5" stroke="#101010" stroke-width="1"/><path d="M4.5 15 V1 M7 15 V8 M10 15 V9 M15 15 V5" stroke="#f0c070" stroke-width="0.9"/><path d="M0.5 15.5 H16" stroke="#101010" stroke-width="1.2"/></svg>
<svg class="a" style="left:312px;top:50px" width="16" height="16" viewBox="0 0 16 16"><path d="M0 9.5 H16 M0 12 H16" stroke="#101010" stroke-width="1"/><path d="M4 1 V9 M12 3 V9" stroke="#101010" stroke-width="0.8"/><path d="M1 1.5 L15 15 M15 2 L1 15" stroke="#e81818" stroke-width="2.6"/></svg>
<svg class="a" style="left:343px;top:50px" width="16" height="16" viewBox="0 0 16 16"><path d="M0 16 L2.5 14.5 L4.5 11 L6.5 4 L8 0.5 L9.5 4 L11.5 11 L13.5 14.5 L16 16 Z" fill="#1a9a1a" stroke="#1040e8" stroke-width="1.1"/><path d="M8 0.5 V16" stroke="#e8e860" stroke-width="1"/></svg>
<svg class="a" style="left:365px;top:50px" width="16" height="16" viewBox="0 0 16 16"><path d="M0 15 L2 13 L4 5 L6 1 L8 1 L10 5 L11 12" stroke="#1040e8" stroke-width="1.5" fill="none"/><path d="M5 15 L6.5 9 L8 3 L10 1 L12 1 L14 5 L15.5 13 L16 15" stroke="#f0a020" stroke-width="1.6" fill="none"/><path d="M7 4 L9 14" stroke="#888" stroke-width="0.8"/></svg>
<svg class="a" style="left:389px;top:49px" width="16" height="16" viewBox="0 0 16 16"><path d="M1 15 L3 13 L5 5 L7 1.5 L9 1.5 L11 5 L13 13 L15 15 Z" fill="#f0a860"/><path d="M0.5 15 L3 13 L5 5 L7 1 L9 1 L11 5 L13 13 L15.5 15" stroke="#1038e0" stroke-width="1.4" fill="none"/></svg>
<svg class="a" style="left:412px;top:49px" width="16" height="16" viewBox="0 0 16 16"><path d="M2 15 L4 12 L6 4 L8 1.5 L10 4 L12 12 L14 15 Z" fill="#f0a860"/><path d="M0.5 15 L3 13 L5 5 L7 1 L9 1 L11 5 L13 13 L15.5 15" stroke="#1038e0" stroke-width="1.2" fill="none"/><path d="M8 5 V15" stroke="#1038e0" stroke-width="1.6"/></svg>
<svg class="a" style="left:442px;top:50px" width="16" height="16" viewBox="0 0 16 16"><path d="M0 16 L3 13 L5.5 9 L7 2 L7.5 0 L8.5 0 L9 2 L10.5 9 L13 13 L16 16 Z" fill="#f08020"/><path d="M2 15 L5 11 L6.5 5 L7.5 0 L8.5 0 L9.5 5 L11 11 L14 15 Z" fill="#f0f020"/><path d="M6 16 L6.5 7 L7.5 0 L8.5 0 L9.5 7 L10 16 Z" fill="#20c020"/><path d="M0 16 L3 13 L4 16 Z M16 16 L13 13 L12 16 Z" fill="#e02010"/></svg>
<svg class="a" style="left:465px;top:50px" width="16" height="16" viewBox="0 0 16 16"><path d="M1 8.5 L5.5 13.5 L15 2" stroke="#10a010" stroke-width="3" fill="none"/></svg>
<svg class="a" style="left:489px;top:50px" width="16" height="16" viewBox="0 0 16 16"><path d="M1 2 H7 V4.5 H3.8 V7 H6.5 V9.3 H3.8 V15 H1 Z" fill="#d01010"/><path d="M8.5 2 H12 Q16 2 16 6 Q16 10 12 10 H11.3 V15 H8.5 Z M11.3 4.3 V7.7 H12 Q13.2 7.7 13.2 6 Q13.2 4.3 12 4.3 Z" fill="#d01010" fill-rule="evenodd"/></svg>
<svg class="a" style="left:519px;top:50px" width="16" height="16" viewBox="0 0 16 16"><defs><linearGradient id="fg" x1="0" x2="1"><stop offset="0" stop-color="#1a5ab0"/><stop offset="0.45" stop-color="#a8d8ff"/><stop offset="1" stop-color="#1a4a90"/></linearGradient></defs><path d="M0.5 2 H15.5 L9.5 8.5 V15 H6.5 V8.5 Z" fill="url(#fg)" stroke="#0a1e40" stroke-width="1.1"/></svg>
<svg class="a" style="left:542px;top:50px" width="16" height="16" viewBox="0 0 16 16"><rect x="6.5" y="0.5" width="9" height="11" fill="#fff6b0"/><path d="M6.5 1 H16" stroke="#102060" stroke-width="1.6"/><path d="M9 4.5 H15.5 M9 7 H15.5 M9 9.5 H15.5" stroke="#e0c040" stroke-width="1"/><path d="M0.5 8.5 H8.5 L5.5 12 V16 H3.5 V12 Z" fill="#6ab0f0" stroke="#0a1e40" stroke-width="0.9"/><path d="M3 9 L6 12 L12 4" stroke="#20a020" stroke-width="2.6" fill="none"/></svg>
<svg class="a" style="left:565px;top:50px" width="16" height="16" viewBox="0 0 16 16"><rect x="6.5" y="0.5" width="9" height="11" fill="#fff6b0"/><path d="M6.5 1 H16" stroke="#102060" stroke-width="1.6"/><path d="M9 4.5 H15.5 M9 7 H15.5 M9 9.5 H15.5" stroke="#e0c040" stroke-width="1"/><path d="M0.5 8.5 H8.5 L5.5 12 V16 H3.5 V12 Z" fill="#6ab0f0" stroke="#0a1e40" stroke-width="0.9"/><path d="M5 12 L10 7" stroke="#e01010" stroke-width="2.4"/><path d="M7.5 5 H12 V9.5 Z" fill="#e01010"/></svg>
<svg class="a" style="left:588px;top:50px" width="16" height="16" viewBox="0 0 16 16"><defs><linearGradient id="fg2" x1="0" x2="1"><stop offset="0" stop-color="#1a5ab0"/><stop offset="0.45" stop-color="#a8d8ff"/><stop offset="1" stop-color="#1a4a90"/></linearGradient></defs><path d="M0.5 2 H15.5 L9.5 8.5 V15 H6.5 V8.5 Z" fill="url(#fg2)" stroke="#0a1e40" stroke-width="1.1"/><path d="M3 3 L13 14 M13 3 L3 14" stroke="#e01010" stroke-width="1.5"/></svg>
<svg class="a" style="left:619px;top:50px" width="16" height="16" viewBox="0 0 16 16"><path d="M4 6 Q8 3 11 5 Q13.5 7 11.5 10.5" stroke="#102080" stroke-width="2" fill="none"/><path d="M1 4 L6 9 L1 10 Z" fill="#102080"/></svg>
<svg class="a" style="left:642px;top:50px" width="16" height="16" viewBox="0 0 16 16"><path d="M12 6 Q8 3 5 5 Q2.5 7 4.5 10.5" stroke="#b8b8b0" stroke-width="2" fill="none"/><path d="M15 4 L10 9 L15 10 Z" fill="#b8b8b0"/></svg>
<svg class="a" style="left:673px;top:50px" width="16" height="16" viewBox="0 0 16 16"><g transform="translate(8 8)"><path d="M-1.2 -7.5 H1.2 L1.8 -5.2 L3.9 -6.3 L5.6 -4.6 L4.5 -2.5 L7.5 -1.2 V1.2 L5.2 1.8 L6.3 3.9 L4.6 5.6 L2.5 4.5 L1.2 7.5 H-1.2 L-1.8 5.2 L-3.9 6.3 L-5.6 4.6 L-4.5 2.5 L-7.5 1.2 V-1.2 L-5.2 -1.8 L-6.3 -3.9 L-4.6 -5.6 L-2.5 -4.5 Z" fill="#5080e0" stroke="#3a60c0" stroke-width="0.6"/><circle r="2.6" fill="#f0f0f8"/></g></svg>
<svg class="a" style="left:704px;top:50px" width="16" height="16" viewBox="0 0 16 16"><rect x="3" y="2" width="10" height="13" rx="2.5" fill="#d01818"/><rect x="3" y="2" width="10" height="9" rx="2" fill="#f0a030"/><rect x="3" y="1" width="10" height="6.5" rx="2.5" fill="#2858d8"/><ellipse cx="8" cy="2" rx="4.5" ry="1.5" fill="#90b0f0"/></svg>
<svg class="a" style="left:734px;top:50px" width="16" height="16" viewBox="0 0 16 16"><path d="M10 10 L16 9 L14 13 L11 14 Z" fill="#808080"/><path d="M2.5 5 Q2.5 0.5 7.5 0.5 Q12.5 0.5 12.5 4.5 Q12.5 7 9.5 8 L9.5 10 L5.5 10 L5.5 7 Q8.5 6.2 8.5 4.6 Q8.5 3.3 7.5 3.3 Q6.3 3.3 6.3 5 Z" fill="#f0f020" stroke="#404000" stroke-width="0.8"/><rect x="5.3" y="11.5" width="4.2" height="3.5" fill="#f0f020" stroke="#404000" stroke-width="0.8"/></svg>
<svg class="a" style="left:758px;top:50px" width="16" height="16" viewBox="0 0 16 16"><path d="M0.5 0.5 L0.5 14 L4 10.5 L6.5 16 L8.5 15 L6 9.5 L10.5 9.5 Z" fill="#101010"/><path d="M8.5 4 Q8.5 0.5 12 0.5 Q15.5 0.5 15.5 3.5 Q15.5 5.5 13 6.5 V8 H11 V5.5 Q13.3 5 13.3 3.6 Q13.3 2.5 12 2.5 Q10.8 2.5 10.8 4 Z" fill="#102080"/><rect x="11" y="9" width="2" height="2" fill="#102080"/></svg>
<svg class="a" style="left:5px;top:75px" width="16" height="16" viewBox="0 0 16 16"><rect x="4" y="8" width="11.5" height="7" fill="#fff" stroke="#000" stroke-width="1"/><path d="M4 15.5 H16" stroke="#000" stroke-width="1.5"/><text x="7" y="14.2" font-family="Liberation Sans" font-weight="bold" font-size="7.5" fill="#000" textLength="8" lengthAdjust="spacingAndGlyphs">no</text><path d="M0.5 8 L5 12.5 L15 1" stroke="#10a010" stroke-width="2.8" fill="none"/></svg>
<svg class="a" style="left:5px;top:97px" width="16" height="16" viewBox="0 0 16 16"><rect x="4" y="8" width="11.5" height="7" fill="#fff" stroke="#000" stroke-width="1"/><path d="M4 15.5 H16" stroke="#000" stroke-width="1.5"/><text x="7.5" y="14.2" font-family="Liberation Sans" font-weight="bold" font-size="7.5" fill="#000" textLength="8" lengthAdjust="spacingAndGlyphs">no</text><path d="M4 1 L3 13 M9 1 L8 13 M0.5 5 H11.5 M0.5 9.5 H11" stroke="#1040e0" stroke-width="2.2"/></svg>
<svg class="a" style="left:5px;top:119px" width="16" height="16" viewBox="0 0 16 16"><rect x="4" y="8" width="11.5" height="7" fill="#fff" stroke="#000" stroke-width="1"/><path d="M4 15.5 H16" stroke="#000" stroke-width="1.5"/><text x="7" y="14.2" font-family="Liberation Sans" font-weight="bold" font-size="7.5" fill="#000" textLength="8" lengthAdjust="spacingAndGlyphs">so</text><path d="M1 1.5 L12 13 M12 1.5 L1 13" stroke="#e01010" stroke-width="2.4"/></svg>
<svg class="a" style="left:5px;top:141px" width="16" height="16" viewBox="0 0 16 16"><path d="M3 9.5 V0.5 M5 9.5 V3 M7.5 9.5 V6 M10.5 9.5 V6 M12.5 9.5 V3.5 M15 9.5 V4" stroke="#000050" stroke-width="1.2"/><path d="M1 9.5 H16 M1 11.5 H16" stroke="#000050" stroke-width="1.1"/><path d="M3 12 L5 15.5 M7.5 12 L9.5 15.5 M12 12 L14 15.5" stroke="#20a020" stroke-width="1.1"/></svg>
<svg class="a" style="left:5px;top:170px" width="16" height="16" viewBox="0 0 16 16"><rect x="0.5" y="1" width="3" height="3" fill="#101060"/><rect x="0.5" y="4" width="3" height="3" fill="#d01818"/><rect x="0.5" y="7" width="3" height="3" fill="#20a020"/><rect x="0.5" y="10" width="3" height="4" fill="#f0d020"/><path d="M5 3 H15 M5 6.5 H15 M5 10 H15 M5 13.5 H15" stroke="#101010" stroke-width="1.1"/><path d="M6 3 L15.5 14.5" stroke="#a01808" stroke-width="2.4"/><path d="M3 3 L6 0.5 L9 1 L7 4 L5 5.5 Z" fill="#101010"/></svg>
<svg class="a" style="left:1004px;top:75px" width="16" height="16" viewBox="0 0 16 16"><path d="M2.5 15 V0.5 M5 15 V0.5" stroke="#a8a596" stroke-width="1.1"/><rect x="7" y="0.5" width="8" height="14.5" fill="#a8a596"/><path d="M0.5 13.5 H15.5 M0.5 15.5 H15.5" stroke="#b8b5a6" stroke-width="1"/></svg>
<svg class="a" style="left:1004px;top:97px" width="16" height="16" viewBox="0 0 16 16"><path d="M3.5 12 V1" stroke="#202020" stroke-width="1"/><path d="M3.5 12 V7 M9.5 12 V6" stroke="#c02020" stroke-width="1"/><path d="M6.5 12 V7" stroke="#f0a020" stroke-width="1"/><path d="M13.5 12 V7" stroke="#30a0e0" stroke-width="1"/><path d="M1 12.5 H16 M1 15 H16" stroke="#101060" stroke-width="1.1"/></svg>
<svg class="a" style="left:1004px;top:118px" width="16" height="16" viewBox="0 0 16 16"><path d="M2.5 13 V2 M4.5 13 V4 M7 13 V7 M9.5 13 V9 M12 13 V6 M14.5 13 V8" stroke="#900030" stroke-width="1"/><path d="M1 13.5 H16 M1 15.5 H16" stroke="#101060" stroke-width="1"/><path d="M8 3.5 H15" stroke="#000" stroke-width="1.4"/><path d="M7 3.5 L10 0.5 V6.5 Z M16 3.5 L13 0.5 V6.5 Z" fill="#000"/></svg>
<svg class="a" style="left:1004px;top:149px" width="16" height="16" viewBox="0 0 16 16"><path d="M0.5 1 H16" stroke="#101060" stroke-width="2"/><rect x="1" y="3" width="15" height="5" fill="none" stroke="#101010" stroke-width="1" stroke-dasharray="1.5 1"/><path d="M4.5 3 V8 M8.5 3 V8 M12.5 3 V8" stroke="#101010" stroke-width="1"/><path d="M5 13 H15" stroke="#10a020" stroke-width="2.6"/><path d="M1 13 L6 9.5 V16.5 Z" fill="#10a020"/></svg>
<div class="a" style="left:2px;top:504px;width:23px;height:22px;background:#b4b8f0;border:1px solid #6b6bd6"></div>
<div class="a" style="left:2px;top:547px;width:23px;height:23px;background:#b4b8f0;border:1px solid #6b6bd6"></div>
<div class="a" style="left:2px;top:570px;width:23px;height:22px;background:#b4b8f0;border:1px solid #6b6bd6"></div>
<div class="a" style="left:2px;top:636px;width:23px;height:23px;background:#b4b8f0;border:1px solid #6b6bd6"></div>
<div class="a" style="left:2px;top:658px;width:23px;height:22px;background:#b4b8f0;border:1px solid #6b6bd6"></div>
<div class="a" style="left:2px;top:358px;width:21px;height:1px;background:#c5c2b2"></div>
<div class="a" style="left:2px;top:500px;width:21px;height:1px;background:#c5c2b2"></div>
<div class="a" style="left:2px;top:683px;width:21px;height:1px;background:#c5c2b2"></div>
<svg class="a" style="left:5px;top:250px" width="16" height="16" viewBox="0 0 16 16"><path d="M3.5 0.5 V13 L6.5 10 L9 15.5 L11 14.5 L8.5 9.5 H12.5 Z" fill="#fff" stroke="#000" stroke-width="1"/></svg>
<svg class="a" style="left:5px;top:271px" width="16" height="16" viewBox="0 0 16 16"><path d="M8 1 L15 8 L8 15 L1 8 Z" fill="#fff" stroke="#000" stroke-width="1.2"/><rect x="5" y="5" width="2.5" height="2.5" fill="#000"/><rect x="8.5" y="5" width="2.5" height="2.5" fill="#000"/><rect x="5" y="8.5" width="2.5" height="2.5" fill="#000"/><rect x="8.5" y="8.5" width="2.5" height="2.5" fill="#000"/><path d="M12 3 H16 M14 1 V5 M12 14 H16" stroke="#000" stroke-width="1"/></svg>
<svg class="a" style="left:5px;top:293px" width="16" height="16" viewBox="0 0 16 16"><circle cx="10" cy="6" r="5" fill="#fff" stroke="#101010" stroke-width="1.5"/><path d="M6.5 9.5 L1.5 14.5" stroke="#1060c0" stroke-width="3"/><path d="M6.5 9.5 L2 14" stroke="#101030" stroke-width="1"/></svg>
<svg class="a" style="left:5px;top:316px" width="16" height="16" viewBox="0 0 16 16"><circle cx="10" cy="6" r="5" fill="#ece9d8" stroke="#b0ad9e" stroke-width="1.8"/><path d="M6.5 9.5 L1.5 14.5" stroke="#b0ad9e" stroke-width="3"/><path d="M3 3 L13 13 M13 3 L7 9" stroke="#b0ad9e" stroke-width="2.2"/></svg>
<svg class="a" style="left:5px;top:338px" width="16" height="16" viewBox="0 0 16 16"><circle cx="10" cy="6" r="5" fill="#ece9d8" stroke="#b0ad9e" stroke-width="1.8"/><path d="M6.5 9.5 L1.5 14.5" stroke="#b0ad9e" stroke-width="3"/><path d="M7 6 H13 M7 6 L9.5 3.5 M7 6 L9.5 8.5" stroke="#b0ad9e" stroke-width="1.6"/></svg>
<svg class="a" style="left:5px;top:367px" width="16" height="16" viewBox="0 0 16 16"><path d="M5 0.5 H11 M8 1 V4" stroke="#101010" stroke-width="1.2"/><path d="M6 3 H10 L11 8 H5 Z" fill="#1040e0"/><rect x="1" y="6" width="4" height="6" fill="#1040e0"/><rect x="11" y="6" width="4" height="6" fill="#1040e0"/><rect x="6" y="4" width="4" height="5" fill="#2020a0"/><path d="M0 14.5 H6 M10 14.5 H16 M3 12 V15 M13 12 V15" stroke="#101010" stroke-width="1.4"/></svg>
<svg class="a" style="left:5px;top:391px" width="16" height="16" viewBox="0 0 16 16"><path d="M8 0.5 V15.5 M2 3 L14 13 M14 3 L2 13 M1 8 H4 M12 8 H15" stroke="#b0ad9e" stroke-width="2"/></svg>
<svg class="a" style="left:5px;top:412px" width="16" height="16" viewBox="0 0 16 16"><path d="M2 1 V15 M14 1 V15" stroke="#b0ad9e" stroke-width="1.8"/><path d="M4 8 H10" stroke="#b0ad9e" stroke-width="2"/><path d="M9 4.5 L12.5 8 L9 11.5 Z" fill="#b0ad9e"/></svg>
<svg class="a" style="left:5px;top:434px" width="16" height="16" viewBox="0 0 16 16"><path d="M2 1 V15 M14 1 V15" stroke="#b0ad9e" stroke-width="1.8"/><path d="M4 8 H10" stroke="#b0ad9e" stroke-width="2"/><path d="M9 4.5 L12.5 8 L9 11.5 Z" fill="#b0ad9e"/></svg>
<svg class="a" style="left:5px;top:457px" width="16" height="16" viewBox="0 0 16 16"><path d="M5 0.5 V16 M11 0.5 V16" stroke="#101010" stroke-width="1.6"/><path d="M3 8 H5 M11 8 H13" stroke="#101010" stroke-width="1"/></svg>
<svg class="a" style="left:5px;top:478px" width="16" height="16" viewBox="0 0 16 16"><path d="M2 2 L14 14 M14 2 L2 14 M8 1 V15" stroke="#b0ad9e" stroke-width="2"/></svg>
<svg class="a" style="left:5px;top:507px" width="16" height="16" viewBox="0 0 16 16"><path d="M0.5 15 L2.5 14 L4.5 9 L6 3 L8 0.8 L10 3 L11.5 9 L13.5 14 L15.5 15" stroke="#1038e0" stroke-width="1.6" fill="none"/></svg>
<svg class="a" style="left:5px;top:529px" width="16" height="16" viewBox="0 0 16 16"><path d="M0.5 15 L2.5 14 L4.5 9 L6 3 L8 0.8 L10 3 L11.5 9 L13.5 14 L15.5 15" stroke="#20a020" stroke-width="1.6" fill="none"/><path d="M8.5 2 V16" stroke="#1040e0" stroke-width="1.6"/></svg>
<svg class="a" style="left:5px;top:551px" width="16" height="16" viewBox="0 0 16 16"><path d="M1 5 H15 M1 11 H15 M5 1 V15 M11 1 V15" stroke="#8080a0" stroke-width="1" stroke-dasharray="1 1"/></svg>
<svg class="a" style="left:5px;top:574px" width="16" height="16" viewBox="0 0 16 16"><path d="M1 8 L3 7 L4.5 2 L6 7 L10 7 L11.5 2 L13 7 L15 8" stroke="#1038e0" stroke-width="1.2" fill="none"/><path d="M0.5 9.5 H15.5" stroke="#101010" stroke-width="1.6"/><path d="M4.5 10 V15 M11.5 10 V15" stroke="#1038e0" stroke-width="1.2"/></svg>
<svg class="a" style="left:5px;top:595px" width="16" height="16" viewBox="0 0 16 16"><path d="M1 9 L3 5 L5 1 L7 4 L9 12 L11 15 L13 12 L15 10" stroke="#20a020" stroke-width="2" fill="none"/><path d="M0.5 8.5 H15.5" stroke="#101010" stroke-width="1.6"/></svg>
<svg class="a" style="left:5px;top:618px" width="16" height="16" viewBox="0 0 16 16"><path d="M1 8.5 H16" stroke="#101010" stroke-width="2"/><path d="M5 1 V11 M9.5 5 V13 M13.5 5 V14" stroke="#c02020" stroke-width="1.2"/></svg>
<svg class="a" style="left:5px;top:639px" width="16" height="16" viewBox="0 0 16 16"><path d="M5 1 V5 M10 1 V5 M12.5 1 V5" stroke="#1040e0" stroke-width="1.2"/><path d="M5 6 L6.5 9 M10 6 L11 9 M12.5 6 L12.5 9" stroke="#8080a0" stroke-width="0.9"/><path d="M6 10 V15 M10.5 10 V15 M13 10 V15" stroke="#e01030" stroke-width="1.2"/></svg>
<svg class="a" style="left:5px;top:661px" width="16" height="16" viewBox="0 0 16 16"><text x="0" y="7" font-family="Liberation Mono" font-weight="bold" font-size="7.5" fill="#1040e0" textLength="16" lengthAdjust="spacingAndGlyphs">[1-1]</text><text x="0" y="15" font-family="Liberation Mono" font-weight="bold" font-size="7.5" fill="#e01030" textLength="16" lengthAdjust="spacingAndGlyphs">[2-2]</text></svg>
<svg class="a" style="left:5px;top:691px" width="16" height="16" viewBox="0 0 16 16"><rect x="1" y="3" width="14" height="12.5" fill="#fff"/><path d="M3 15 V3 M6 15 V6 M9 15 V8 M12 15 V9" stroke="#1030a0" stroke-width="1.2"/><path d="M1.5 15.5 H15.5" stroke="#101010" stroke-width="1"/><path d="M5 3 L15 14" stroke="#b01010" stroke-width="2.6"/><path d="M0.5 4 L4 0.5 L8 1 L7 3.5 L3.5 5.5 Z" fill="#101010"/></svg>
<svg class="a" style="left:1005px;top:249px" width="16" height="16" viewBox="0 0 16 16"><path d="M5 0.5 H11 M8 1 V4" stroke="#101010" stroke-width="1.2"/><path d="M6 3 H10 L11 8 H5 Z" fill="#1040e0"/><rect x="1" y="6" width="4" height="6" fill="#1040e0"/><rect x="11" y="6" width="4" height="6" fill="#1040e0"/><rect x="6" y="4" width="4" height="5" fill="#2020a0"/><path d="M0 14.5 H6 M10 14.5 H16 M3 12 V15 M13 12 V15" stroke="#101010" stroke-width="1.4"/></svg>
<svg class="a" style="left:1005px;top:272px" width="16" height="16" viewBox="0 0 16 16"><path d="M8 0.5 V15.5 M2 3 L14 13 M14 3 L2 13 M1 8 H4 M12 8 H15" stroke="#b0ad9e" stroke-width="2"/></svg>
<svg class="a" style="left:1005px;top:294px" width="16" height="16" viewBox="0 0 16 16"><path d="M2 1 V15 M14 1 V15" stroke="#b0ad9e" stroke-width="1.8"/><path d="M4 8 H10" stroke="#b0ad9e" stroke-width="2"/><path d="M9 4.5 L12.5 8 L9 11.5 Z" fill="#b0ad9e"/></svg>
<svg class="a" style="left:1005px;top:316px" width="16" height="16" viewBox="0 0 16 16"><path d="M2 1 V15 M14 1 V15" stroke="#b0ad9e" stroke-width="1.8"/><path d="M4 8 H10" stroke="#b0ad9e" stroke-width="2"/><path d="M9 4.5 L12.5 8 L9 11.5 Z" fill="#b0ad9e"/></svg>
<svg class="a" style="left:1005px;top:337px" width="16" height="16" viewBox="0 0 16 16"><path d="M4.5 0.5 V16" stroke="#2a1aa0" stroke-width="2"/><path d="M10.5 1.5 V8.5 M7 5 H14 M8 2.5 L13 7.5 M13 2.5 L8 7.5" stroke="#10b010" stroke-width="1.3"/></svg>
<svg class="a" style="left:1005px;top:368px" width="16" height="16" viewBox="0 0 16 16"><rect x="4" y="0.5" width="8" height="7" fill="#fff" stroke="#aaa" stroke-width="0.6"/><path d="M5 1.8 H11 M5 3.3 H11 M5 4.8 H11 M5 6.3 H11" stroke="#8a8a8a" stroke-width="0.8"/><defs><linearGradient id="prg" x1="0" y1="0" x2="0" y2="1"><stop offset="0" stop-color="#f4f4f4"/><stop offset="1" stop-color="#9a9a9a"/></linearGradient></defs><path d="M2 7 H14 Q15.5 7 15.5 8.5 V12.5 Q15.5 13.5 14.5 13.5 H1.5 Q0.5 13.5 0.5 12.5 V8.5 Q0.5 7 2 7 Z" fill="url(#prg)" stroke="#1a1a1a" stroke-width="1.1"/><rect x="2.5" y="9.5" width="11" height="1.6" fill="#dcdcdc"/><rect x="2" y="13" width="2" height="2.5" fill="#1a1a1a"/><rect x="12" y="13" width="2" height="2.5" fill="#1a1a1a"/><rect x="4.5" y="13.5" width="7" height="2" fill="#f4f4f4"/></svg>
<svg class="a" style="left:1005px;top:397px" width="16" height="16" viewBox="0 0 16 16"><rect x="8" y="1" width="8" height="4" fill="#20c020"/><path d="M8 5 H16 M8 8 H16" stroke="#101010" stroke-width="1"/><path d="M1 10.5 H16 M1 13 H16 M1 15.5 H16" stroke="#101010" stroke-width="1" stroke-dasharray="2 1"/><path d="M4 4 L15 15" stroke="#b01010" stroke-width="2.6"/><path d="M0.5 4.5 L4 1 L8 1.5 L6.5 4 L3 6 Z" fill="#101010"/></svg>
</body></html>
